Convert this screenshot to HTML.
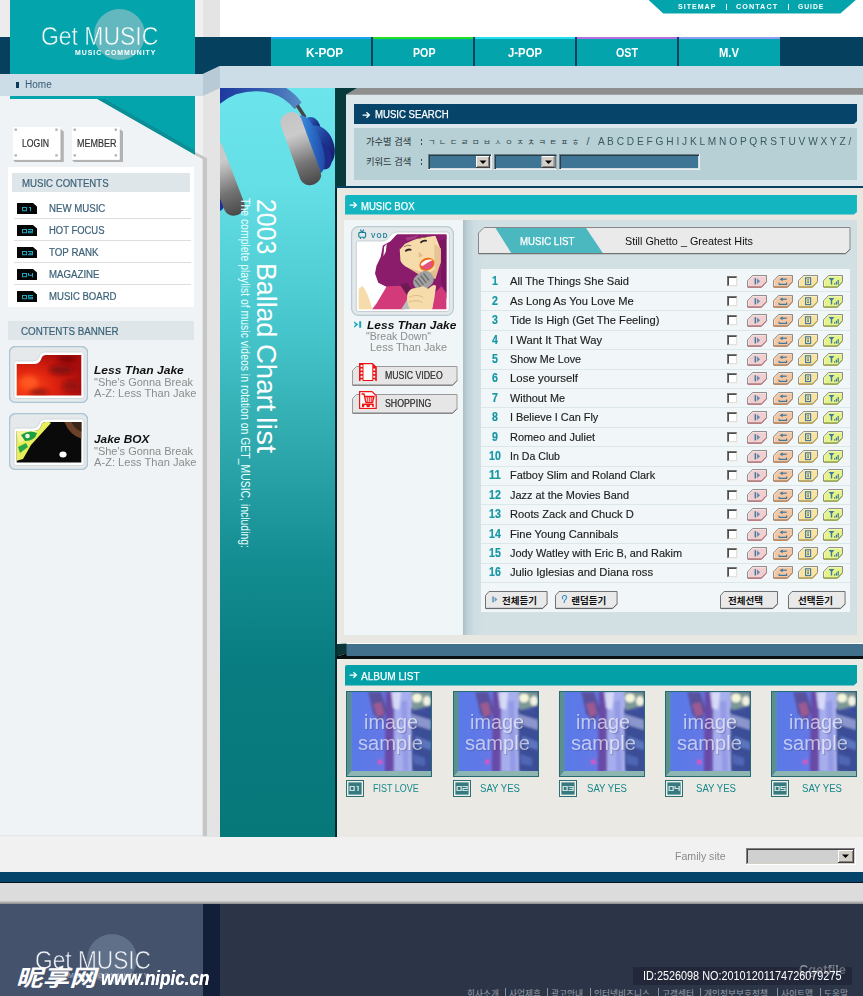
<!DOCTYPE html>
<html><head><meta charset="utf-8"><title>Get MUSIC</title>
<style>
html,body{margin:0;padding:0;background:#fff;}
#p{position:relative;width:863px;height:996px;overflow:hidden;background:#fff;font-family:"Liberation Sans",sans-serif;}
#p>div,#p>svg,#p>span.t{position:absolute;}
#p span.t{white-space:nowrap;line-height:1;transform-origin:0 0;}
</style></head><body><div id="p">
<div style="left:0px;top:0px;width:10px;height:37px;background:#ececec;"></div>
<div style="left:195px;top:0px;width:8px;height:160px;background:#f0f0f0;"></div>
<div style="left:203px;top:0px;width:17px;height:837px;background:#e4e4e4;"></div>
<div style="left:0px;top:37px;width:10px;height:37px;background:#05405f;"></div>
<div style="left:195px;top:37px;width:668px;height:29px;background:#05405f;"></div>
<div style="left:195px;top:66px;width:8px;height:8px;background:#05405f;"></div>
<svg style="left:0px;top:0px;" width="220" height="170" viewBox="0 0 220 170"><polygon points="10,0 195,0 195,155 97,99 10,99" fill="#04a4ac"/><polygon points="97,99 195,155 195,150.5 105,99" fill="#0b8e96"/><polygon points="203,66 220,66 203,74" fill="#05405f"/><polygon points="203,74 220,66 220,88 203,96" fill="#b7cad5"/></svg>
<div style="left:0px;top:74px;width:203px;height:22px;background:#ccdde8;"></div>
<div style="left:220px;top:66px;width:643px;height:22px;background:#ccdde8;"></div>
<span class="t" style="left:41.30px;top:23px;font-size:26px;color:#fff;transform:scaleX(0.8826);-webkit-text-stroke:0.55px #04a4ac;">Get MUSIC</span>
<div style="left:94px;top:9px;width:51px;height:51px;border-radius:50%;background:#62b8be;overflow:hidden;"><span class="t" style="left:-52.70px;top:14px;font-size:26px;color:#fff;transform:scaleX(0.8826);position:absolute;-webkit-text-stroke:0.55px #62b8be;">Get MUSIC</span></div>
<span class="t" style="left:74.60px;top:50px;font-size:6.5px;color:#fff;font-weight:bold;letter-spacing:0.9px;transform:scaleX(1.0664);">MUSIC COMMUNITY</span>
<div style="left:16px;top:82px;width:2.5px;height:6px;background:#0a3a5a;"></div>
<span class="t" style="left:25.30px;top:80px;font-size:10px;color:#3a5a70;transform:scaleX(1.0009);">Home</span>
<div style="left:271px;top:37px;width:100.3px;height:29px;background:#04a4ac;"></div>
<div style="left:271px;top:37px;width:100.3px;height:2.3px;background:#18a4ea;"></div>
<span class="t" style="left:306.20px;top:47px;font-size:12px;color:#fff;font-weight:bold;transform:scaleX(0.9788);">K-POP</span>
<div style="left:373px;top:37px;width:100.3px;height:29px;background:#04a4ac;"></div>
<div style="left:373px;top:37px;width:100.3px;height:2.3px;background:#22dd22;"></div>
<span class="t" style="left:413.00px;top:47px;font-size:12px;color:#fff;font-weight:bold;transform:scaleX(0.8879);">POP</span>
<div style="left:475px;top:37px;width:100.3px;height:29px;background:#04a4ac;"></div>
<div style="left:475px;top:37px;width:100.3px;height:2.3px;background:#22ddee;"></div>
<span class="t" style="left:507.50px;top:47px;font-size:12px;color:#fff;font-weight:bold;transform:scaleX(0.9441);">J-POP</span>
<div style="left:577px;top:37px;width:100.3px;height:29px;background:#04a4ac;"></div>
<div style="left:577px;top:37px;width:100.3px;height:2.3px;background:#b070e0;"></div>
<span class="t" style="left:616.00px;top:47px;font-size:12px;color:#fff;font-weight:bold;transform:scaleX(0.8918);">OST</span>
<div style="left:679px;top:37px;width:101px;height:29px;background:#04a4ac;"></div>
<div style="left:679px;top:37px;width:101px;height:2.3px;background:#8c9cf0;"></div>
<span class="t" style="left:719.00px;top:47px;font-size:12px;color:#fff;font-weight:bold;transform:scaleX(0.9375);">M.V</span>
<svg style="left:640px;top:0px;" width="223" height="16" viewBox="0 0 223 16"><polygon points="8.6,0 215.8,0 200.3,13.4 23.3,13.4" fill="#04a4ac"/></svg>
<span class="t" style="left:677.60px;top:3px;font-size:7px;color:#fff;font-weight:bold;letter-spacing:1px;transform:scaleX(1.0075);">SITEMAP</span>
<span class="t" style="left:735.60px;top:3px;font-size:7px;color:#fff;font-weight:bold;letter-spacing:1px;transform:scaleX(1.0345);">CONTACT</span>
<span class="t" style="left:797.70px;top:3px;font-size:7px;color:#fff;font-weight:bold;letter-spacing:1px;transform:scaleX(0.9680);">GUIDE</span>
<div style="left:725.5px;top:3.5px;width:1px;height:6px;background:#fff;"></div>
<div style="left:787.5px;top:3.5px;width:1px;height:6px;background:#fff;"></div>
<svg style="left:0px;top:96px;" width="210" height="742" viewBox="0 0 210 742"><polygon points="0,0 0,740 202.6,740 202.6,63 195,59 97,3 10,3 10,0" fill="#eff3f5"/><polygon points="195,56 207,62 207,740 202.6,740 202.6,63 195,59" fill="#c6c6c6"/><rect x="0" y="739.5" width="203" height="1" fill="#dcdcdc"/></svg>
<svg style="left:12.5px;top:126.5px;" width="51.3" height="35.7" viewBox="0 0 51.3 35.7"><polygon points="47.3,2 50.8,4.5 50.8,35.2 2,35.2 0,32.7 47.3,32.7" fill="#b2b2b2"/><rect x="0" y="0" width="47.3" height="32.7" fill="#fff"/><rect x="1.5" y="1.5" width="2.4" height="2.4" fill="#b4b4b4"/><rect x="42.3" y="1.5" width="2.4" height="2.4" fill="#b4b4b4"/><rect x="1.5" y="27.200000000000003" width="2.4" height="2.4" fill="#b4b4b4"/><rect x="42.3" y="27.200000000000003" width="2.4" height="2.4" fill="#b4b4b4"/></svg>
<span class="t" style="left:21.70px;top:139px;font-size:10px;color:#333;transform:scaleX(0.8709);-webkit-text-stroke:0.2px #333;">LOGIN</span>
<svg style="left:71.6px;top:126.5px;" width="51.6" height="35.7" viewBox="0 0 51.6 35.7"><polygon points="47.6,2 51.1,4.5 51.1,35.2 2,35.2 0,32.7 47.6,32.7" fill="#b2b2b2"/><rect x="0" y="0" width="47.6" height="32.7" fill="#fff"/><rect x="1.5" y="1.5" width="2.4" height="2.4" fill="#b4b4b4"/><rect x="42.6" y="1.5" width="2.4" height="2.4" fill="#b4b4b4"/><rect x="1.5" y="27.200000000000003" width="2.4" height="2.4" fill="#b4b4b4"/><rect x="42.6" y="27.200000000000003" width="2.4" height="2.4" fill="#b4b4b4"/></svg>
<span class="t" style="left:77.00px;top:139px;font-size:10px;color:#333;transform:scaleX(0.8999);-webkit-text-stroke:0.2px #333;">MEMBER</span>
<div style="left:8px;top:167px;width:186px;height:140px;background:#fff;"></div>
<div style="left:12px;top:173px;width:178px;height:19px;background:#dfe6e9;"></div>
<span class="t" style="left:21.70px;top:179px;font-size:10px;color:#3b6178;transform:scaleX(0.9622);-webkit-text-stroke:0.2px #3b6178;">MUSIC CONTENTS</span>
<svg style="left:17px;top:203px;" width="20" height="11" viewBox="0 0 20 11"><polygon points="0,0 16,0 20,3.5 20,11 0,11" fill="#050505"/><rect x="5.00" y="4.20" width="1.0" height="0.8" fill="#22d2ee"/><rect x="6.00" y="4.20" width="1.0" height="0.8" fill="#22d2ee"/><rect x="7.00" y="4.20" width="1.0" height="0.8" fill="#22d2ee"/><rect x="8.00" y="4.20" width="1.0" height="0.8" fill="#22d2ee"/><rect x="9.00" y="4.20" width="1.0" height="0.8" fill="#22d2ee"/><rect x="5.00" y="5.00" width="1.0" height="0.8" fill="#22d2ee"/><rect x="9.00" y="5.00" width="1.0" height="0.8" fill="#22d2ee"/><rect x="5.00" y="5.80" width="1.0" height="0.8" fill="#22d2ee"/><rect x="9.00" y="5.80" width="1.0" height="0.8" fill="#22d2ee"/><rect x="5.00" y="6.60" width="1.0" height="0.8" fill="#22d2ee"/><rect x="9.00" y="6.60" width="1.0" height="0.8" fill="#22d2ee"/><rect x="5.00" y="7.40" width="1.0" height="0.8" fill="#22d2ee"/><rect x="6.00" y="7.40" width="1.0" height="0.8" fill="#22d2ee"/><rect x="7.00" y="7.40" width="1.0" height="0.8" fill="#22d2ee"/><rect x="8.00" y="7.40" width="1.0" height="0.8" fill="#22d2ee"/><rect x="9.00" y="7.40" width="1.0" height="0.8" fill="#22d2ee"/><rect x="12.00" y="4.20" width="1.0" height="0.8" fill="#22d2ee"/><rect x="13.00" y="4.20" width="1.0" height="0.8" fill="#22d2ee"/><rect x="13.00" y="5.00" width="1.0" height="0.8" fill="#22d2ee"/><rect x="13.00" y="5.80" width="1.0" height="0.8" fill="#22d2ee"/><rect x="13.00" y="6.60" width="1.0" height="0.8" fill="#22d2ee"/><rect x="13.00" y="7.40" width="1.0" height="0.8" fill="#22d2ee"/></svg>
<span class="t" style="left:48.70px;top:204px;font-size:10px;color:#3b6178;transform:scaleX(0.9652);-webkit-text-stroke:0.2px #3b6178;">NEW MUSIC</span>
<div style="left:13.5px;top:218px;width:177px;height:1px;background:#dedede;"></div>
<svg style="left:17px;top:225px;" width="20" height="11" viewBox="0 0 20 11"><polygon points="0,0 16,0 20,3.5 20,11 0,11" fill="#050505"/><rect x="5.00" y="4.20" width="1.0" height="0.8" fill="#22d2ee"/><rect x="6.00" y="4.20" width="1.0" height="0.8" fill="#22d2ee"/><rect x="7.00" y="4.20" width="1.0" height="0.8" fill="#22d2ee"/><rect x="8.00" y="4.20" width="1.0" height="0.8" fill="#22d2ee"/><rect x="9.00" y="4.20" width="1.0" height="0.8" fill="#22d2ee"/><rect x="5.00" y="5.00" width="1.0" height="0.8" fill="#22d2ee"/><rect x="9.00" y="5.00" width="1.0" height="0.8" fill="#22d2ee"/><rect x="5.00" y="5.80" width="1.0" height="0.8" fill="#22d2ee"/><rect x="9.00" y="5.80" width="1.0" height="0.8" fill="#22d2ee"/><rect x="5.00" y="6.60" width="1.0" height="0.8" fill="#22d2ee"/><rect x="9.00" y="6.60" width="1.0" height="0.8" fill="#22d2ee"/><rect x="5.00" y="7.40" width="1.0" height="0.8" fill="#22d2ee"/><rect x="6.00" y="7.40" width="1.0" height="0.8" fill="#22d2ee"/><rect x="7.00" y="7.40" width="1.0" height="0.8" fill="#22d2ee"/><rect x="8.00" y="7.40" width="1.0" height="0.8" fill="#22d2ee"/><rect x="9.00" y="7.40" width="1.0" height="0.8" fill="#22d2ee"/><rect x="11.00" y="4.20" width="1.0" height="0.8" fill="#22d2ee"/><rect x="12.00" y="4.20" width="1.0" height="0.8" fill="#22d2ee"/><rect x="13.00" y="4.20" width="1.0" height="0.8" fill="#22d2ee"/><rect x="14.00" y="4.20" width="1.0" height="0.8" fill="#22d2ee"/><rect x="15.00" y="4.20" width="1.0" height="0.8" fill="#22d2ee"/><rect x="15.00" y="5.00" width="1.0" height="0.8" fill="#22d2ee"/><rect x="11.00" y="5.80" width="1.0" height="0.8" fill="#22d2ee"/><rect x="12.00" y="5.80" width="1.0" height="0.8" fill="#22d2ee"/><rect x="13.00" y="5.80" width="1.0" height="0.8" fill="#22d2ee"/><rect x="14.00" y="5.80" width="1.0" height="0.8" fill="#22d2ee"/><rect x="15.00" y="5.80" width="1.0" height="0.8" fill="#22d2ee"/><rect x="11.00" y="6.60" width="1.0" height="0.8" fill="#22d2ee"/><rect x="11.00" y="7.40" width="1.0" height="0.8" fill="#22d2ee"/><rect x="12.00" y="7.40" width="1.0" height="0.8" fill="#22d2ee"/><rect x="13.00" y="7.40" width="1.0" height="0.8" fill="#22d2ee"/><rect x="14.00" y="7.40" width="1.0" height="0.8" fill="#22d2ee"/><rect x="15.00" y="7.40" width="1.0" height="0.8" fill="#22d2ee"/></svg>
<span class="t" style="left:48.70px;top:226px;font-size:10px;color:#3b6178;transform:scaleX(0.9454);-webkit-text-stroke:0.2px #3b6178;">HOT FOCUS</span>
<div style="left:13.5px;top:240px;width:177px;height:1px;background:#dedede;"></div>
<svg style="left:17px;top:247px;" width="20" height="11" viewBox="0 0 20 11"><polygon points="0,0 16,0 20,3.5 20,11 0,11" fill="#050505"/><rect x="5.00" y="4.20" width="1.0" height="0.8" fill="#22d2ee"/><rect x="6.00" y="4.20" width="1.0" height="0.8" fill="#22d2ee"/><rect x="7.00" y="4.20" width="1.0" height="0.8" fill="#22d2ee"/><rect x="8.00" y="4.20" width="1.0" height="0.8" fill="#22d2ee"/><rect x="9.00" y="4.20" width="1.0" height="0.8" fill="#22d2ee"/><rect x="5.00" y="5.00" width="1.0" height="0.8" fill="#22d2ee"/><rect x="9.00" y="5.00" width="1.0" height="0.8" fill="#22d2ee"/><rect x="5.00" y="5.80" width="1.0" height="0.8" fill="#22d2ee"/><rect x="9.00" y="5.80" width="1.0" height="0.8" fill="#22d2ee"/><rect x="5.00" y="6.60" width="1.0" height="0.8" fill="#22d2ee"/><rect x="9.00" y="6.60" width="1.0" height="0.8" fill="#22d2ee"/><rect x="5.00" y="7.40" width="1.0" height="0.8" fill="#22d2ee"/><rect x="6.00" y="7.40" width="1.0" height="0.8" fill="#22d2ee"/><rect x="7.00" y="7.40" width="1.0" height="0.8" fill="#22d2ee"/><rect x="8.00" y="7.40" width="1.0" height="0.8" fill="#22d2ee"/><rect x="9.00" y="7.40" width="1.0" height="0.8" fill="#22d2ee"/><rect x="11.00" y="4.20" width="1.0" height="0.8" fill="#22d2ee"/><rect x="12.00" y="4.20" width="1.0" height="0.8" fill="#22d2ee"/><rect x="13.00" y="4.20" width="1.0" height="0.8" fill="#22d2ee"/><rect x="14.00" y="4.20" width="1.0" height="0.8" fill="#22d2ee"/><rect x="15.00" y="4.20" width="1.0" height="0.8" fill="#22d2ee"/><rect x="15.00" y="5.00" width="1.0" height="0.8" fill="#22d2ee"/><rect x="12.00" y="5.80" width="1.0" height="0.8" fill="#22d2ee"/><rect x="13.00" y="5.80" width="1.0" height="0.8" fill="#22d2ee"/><rect x="14.00" y="5.80" width="1.0" height="0.8" fill="#22d2ee"/><rect x="15.00" y="5.80" width="1.0" height="0.8" fill="#22d2ee"/><rect x="15.00" y="6.60" width="1.0" height="0.8" fill="#22d2ee"/><rect x="11.00" y="7.40" width="1.0" height="0.8" fill="#22d2ee"/><rect x="12.00" y="7.40" width="1.0" height="0.8" fill="#22d2ee"/><rect x="13.00" y="7.40" width="1.0" height="0.8" fill="#22d2ee"/><rect x="14.00" y="7.40" width="1.0" height="0.8" fill="#22d2ee"/><rect x="15.00" y="7.40" width="1.0" height="0.8" fill="#22d2ee"/></svg>
<span class="t" style="left:48.70px;top:248px;font-size:10px;color:#3b6178;transform:scaleX(0.9752);-webkit-text-stroke:0.2px #3b6178;">TOP RANK</span>
<div style="left:13.5px;top:262px;width:177px;height:1px;background:#dedede;"></div>
<svg style="left:17px;top:269px;" width="20" height="11" viewBox="0 0 20 11"><polygon points="0,0 16,0 20,3.5 20,11 0,11" fill="#050505"/><rect x="5.00" y="4.20" width="1.0" height="0.8" fill="#22d2ee"/><rect x="6.00" y="4.20" width="1.0" height="0.8" fill="#22d2ee"/><rect x="7.00" y="4.20" width="1.0" height="0.8" fill="#22d2ee"/><rect x="8.00" y="4.20" width="1.0" height="0.8" fill="#22d2ee"/><rect x="9.00" y="4.20" width="1.0" height="0.8" fill="#22d2ee"/><rect x="5.00" y="5.00" width="1.0" height="0.8" fill="#22d2ee"/><rect x="9.00" y="5.00" width="1.0" height="0.8" fill="#22d2ee"/><rect x="5.00" y="5.80" width="1.0" height="0.8" fill="#22d2ee"/><rect x="9.00" y="5.80" width="1.0" height="0.8" fill="#22d2ee"/><rect x="5.00" y="6.60" width="1.0" height="0.8" fill="#22d2ee"/><rect x="9.00" y="6.60" width="1.0" height="0.8" fill="#22d2ee"/><rect x="5.00" y="7.40" width="1.0" height="0.8" fill="#22d2ee"/><rect x="6.00" y="7.40" width="1.0" height="0.8" fill="#22d2ee"/><rect x="7.00" y="7.40" width="1.0" height="0.8" fill="#22d2ee"/><rect x="8.00" y="7.40" width="1.0" height="0.8" fill="#22d2ee"/><rect x="9.00" y="7.40" width="1.0" height="0.8" fill="#22d2ee"/><rect x="11.00" y="4.20" width="1.0" height="0.8" fill="#22d2ee"/><rect x="15.00" y="4.20" width="1.0" height="0.8" fill="#22d2ee"/><rect x="11.00" y="5.00" width="1.0" height="0.8" fill="#22d2ee"/><rect x="15.00" y="5.00" width="1.0" height="0.8" fill="#22d2ee"/><rect x="11.00" y="5.80" width="1.0" height="0.8" fill="#22d2ee"/><rect x="12.00" y="5.80" width="1.0" height="0.8" fill="#22d2ee"/><rect x="13.00" y="5.80" width="1.0" height="0.8" fill="#22d2ee"/><rect x="14.00" y="5.80" width="1.0" height="0.8" fill="#22d2ee"/><rect x="15.00" y="5.80" width="1.0" height="0.8" fill="#22d2ee"/><rect x="15.00" y="6.60" width="1.0" height="0.8" fill="#22d2ee"/><rect x="15.00" y="7.40" width="1.0" height="0.8" fill="#22d2ee"/></svg>
<span class="t" style="left:48.70px;top:270px;font-size:10px;color:#3b6178;transform:scaleX(0.9669);-webkit-text-stroke:0.2px #3b6178;">MAGAZINE</span>
<div style="left:13.5px;top:284px;width:177px;height:1px;background:#dedede;"></div>
<svg style="left:17px;top:291px;" width="20" height="11" viewBox="0 0 20 11"><polygon points="0,0 16,0 20,3.5 20,11 0,11" fill="#050505"/><rect x="5.00" y="4.20" width="1.0" height="0.8" fill="#22d2ee"/><rect x="6.00" y="4.20" width="1.0" height="0.8" fill="#22d2ee"/><rect x="7.00" y="4.20" width="1.0" height="0.8" fill="#22d2ee"/><rect x="8.00" y="4.20" width="1.0" height="0.8" fill="#22d2ee"/><rect x="9.00" y="4.20" width="1.0" height="0.8" fill="#22d2ee"/><rect x="5.00" y="5.00" width="1.0" height="0.8" fill="#22d2ee"/><rect x="9.00" y="5.00" width="1.0" height="0.8" fill="#22d2ee"/><rect x="5.00" y="5.80" width="1.0" height="0.8" fill="#22d2ee"/><rect x="9.00" y="5.80" width="1.0" height="0.8" fill="#22d2ee"/><rect x="5.00" y="6.60" width="1.0" height="0.8" fill="#22d2ee"/><rect x="9.00" y="6.60" width="1.0" height="0.8" fill="#22d2ee"/><rect x="5.00" y="7.40" width="1.0" height="0.8" fill="#22d2ee"/><rect x="6.00" y="7.40" width="1.0" height="0.8" fill="#22d2ee"/><rect x="7.00" y="7.40" width="1.0" height="0.8" fill="#22d2ee"/><rect x="8.00" y="7.40" width="1.0" height="0.8" fill="#22d2ee"/><rect x="9.00" y="7.40" width="1.0" height="0.8" fill="#22d2ee"/><rect x="11.00" y="4.20" width="1.0" height="0.8" fill="#22d2ee"/><rect x="12.00" y="4.20" width="1.0" height="0.8" fill="#22d2ee"/><rect x="13.00" y="4.20" width="1.0" height="0.8" fill="#22d2ee"/><rect x="14.00" y="4.20" width="1.0" height="0.8" fill="#22d2ee"/><rect x="15.00" y="4.20" width="1.0" height="0.8" fill="#22d2ee"/><rect x="11.00" y="5.00" width="1.0" height="0.8" fill="#22d2ee"/><rect x="11.00" y="5.80" width="1.0" height="0.8" fill="#22d2ee"/><rect x="12.00" y="5.80" width="1.0" height="0.8" fill="#22d2ee"/><rect x="13.00" y="5.80" width="1.0" height="0.8" fill="#22d2ee"/><rect x="14.00" y="5.80" width="1.0" height="0.8" fill="#22d2ee"/><rect x="15.00" y="5.80" width="1.0" height="0.8" fill="#22d2ee"/><rect x="15.00" y="6.60" width="1.0" height="0.8" fill="#22d2ee"/><rect x="11.00" y="7.40" width="1.0" height="0.8" fill="#22d2ee"/><rect x="12.00" y="7.40" width="1.0" height="0.8" fill="#22d2ee"/><rect x="13.00" y="7.40" width="1.0" height="0.8" fill="#22d2ee"/><rect x="14.00" y="7.40" width="1.0" height="0.8" fill="#22d2ee"/><rect x="15.00" y="7.40" width="1.0" height="0.8" fill="#22d2ee"/></svg>
<span class="t" style="left:48.70px;top:292px;font-size:10px;color:#3b6178;transform:scaleX(0.9566);-webkit-text-stroke:0.2px #3b6178;">MUSIC BOARD</span>
<div style="left:8px;top:321px;width:186px;height:19px;background:#dfe6e9;"></div>
<span class="t" style="left:21.20px;top:327px;font-size:10px;color:#3b6178;transform:scaleX(0.9804);-webkit-text-stroke:0.2px #3b6178;">CONTENTS BANNER</span>
<svg style="left:9px;top:346px;" width="79" height="57" viewBox="0 0 79 57"><rect x="0.5" y="0.5" width="78" height="56" rx="6" ry="6" fill="#e6e9eb" stroke="#adc6d3" stroke-width="1.5"/><path d="M7 52.5 Q5 52.5 5 50.5 V17 Q5 15 7 15 H24 Q28.5 15 30 11 Q31.5 6 36 6 H73 Q75 6 75 8 V50.5 Q75 52.5 73 52.5 Z" fill="#fff" stroke="#c9d2d7" stroke-width="0.8"/><clipPath id="bca"><path d="M7.7 18 H25 Q30.5 18 32.2 13 Q33.3 9 37 9 H72.3 V49.5 H7.7 Z"/></clipPath><g clip-path="url(#bca)"><defs><radialGradient id="rg1" cx="0.2" cy="0.75" r="0.8"><stop offset="0" stop-color="#ff4a18"/><stop offset="0.45" stop-color="#e02410"/><stop offset="1" stop-color="#a80c0c"/></radialGradient><filter id="bl1"><feGaussianBlur stdDeviation="2"/></filter></defs><rect x="5" y="6" width="70" height="46" fill="url(#rg1)"/><g filter="url(#bl1)"><ellipse cx="52" cy="24" rx="12" ry="5" fill="#7a0a10" opacity="0.8"/><ellipse cx="62" cy="40" rx="9" ry="6" fill="#8a0c10" opacity="0.7"/><ellipse cx="30" cy="46" rx="10" ry="4" fill="#8a1010" opacity="0.7"/><ellipse cx="58" cy="13" rx="9" ry="3" fill="#6a0808" opacity="0.7"/><ellipse cx="20" cy="36" rx="9" ry="6" fill="#ff5a22" opacity="0.9"/></g></g></svg>
<svg style="left:9px;top:413px;" width="79" height="57" viewBox="0 0 79 57"><rect x="0.5" y="0.5" width="78" height="56" rx="6" ry="6" fill="#e6e9eb" stroke="#adc6d3" stroke-width="1.5"/><path d="M7 52.5 Q5 52.5 5 50.5 V17 Q5 15 7 15 H24 Q28.5 15 30 11 Q31.5 6 36 6 H73 Q75 6 75 8 V50.5 Q75 52.5 73 52.5 Z" fill="#fff" stroke="#c9d2d7" stroke-width="0.8"/><clipPath id="bcb"><path d="M7.7 18 H25 Q30.5 18 32.2 13 Q33.3 9 37 9 H72.3 V49.5 H7.7 Z"/></clipPath><g clip-path="url(#bcb)"><rect x="5" y="6" width="70" height="46" fill="#0a0a0a"/><polygon points="7,18 38,8 42,10 22,32 14,46 7,48" fill="#e8ee5a"/><polygon points="7,18 30,12 26,22 10,30" fill="#f4f49a"/><path d="M12 22 q8 -6 16 -2 q-2 8 -12 8 z" fill="#1aa040"/><circle cx="18.5" cy="23" r="2.3" fill="#f4f4e0"/><path d="M9 34 l8 -4 l2 4 l-8 6 z" fill="#2aa848"/><path d="M55 8 H73 V26 Q60 22 55 8Z" fill="#6a4028"/><path d="M62 8 H73 V19 Q65 16 62 8Z" fill="#3a2418"/><ellipse cx="54" cy="41.5" rx="3.6" ry="3" fill="#fff"/></g></svg>
<span class="t" style="left:94.20px;top:365px;font-size:11px;color:#111;font-weight:bold;font-style:italic;transform:scaleX(1.0960);">Less Than Jake</span>
<span class="t" style="left:93.50px;top:377px;font-size:11px;color:#8c8c8c;transform:scaleX(1.0005);">"She's Gonna Break</span>
<span class="t" style="left:94.40px;top:388px;font-size:11px;color:#8c8c8c;transform:scaleX(1.0120);">A-Z: Less Than Jake</span>
<span class="t" style="left:94.20px;top:434px;font-size:11px;color:#111;font-weight:bold;font-style:italic;transform:scaleX(1.0766);">Jake BOX</span>
<span class="t" style="left:93.50px;top:446px;font-size:11px;color:#8c8c8c;transform:scaleX(1.0005);">"She's Gonna Break</span>
<span class="t" style="left:94.40px;top:457px;font-size:11px;color:#8c8c8c;transform:scaleX(1.0120);">A-Z: Less Than Jake</span>
<svg style="left:220px;top:88px;" width="115" height="749" viewBox="0 0 115 749"><defs>
<linearGradient id="pg" x1="0" y1="0" x2="0" y2="1">
<stop offset="0" stop-color="#6be5eb"/><stop offset="0.13" stop-color="#64dfe5"/>
<stop offset="0.32" stop-color="#46c6cc"/><stop offset="0.48" stop-color="#2ea8ac"/>
<stop offset="0.63" stop-color="#138d91"/><stop offset="0.78" stop-color="#087c80"/>
<stop offset="1" stop-color="#07787a"/></linearGradient>
<linearGradient id="bandg" x1="0" y1="0" x2="1" y2="0">
<stop offset="0" stop-color="#1b38a0"/><stop offset="0.5" stop-color="#3258ac"/><stop offset="1" stop-color="#5a8cc6"/></linearGradient>
<linearGradient id="padg" x1="0" y1="0" x2="0" y2="1">
<stop offset="0" stop-color="#c4c4c4"/><stop offset="0.3" stop-color="#cbcbcb"/>
<stop offset="0.42" stop-color="#b4b4b4"/><stop offset="0.7" stop-color="#747474"/>
<stop offset="1" stop-color="#484848"/></linearGradient>
<linearGradient id="cupg" x1="0" y1="0" x2="1" y2="1">
<stop offset="0" stop-color="#4aaaf4"/><stop offset="0.5" stop-color="#2d72ca"/><stop offset="1" stop-color="#1b3898"/></linearGradient>
<linearGradient id="cupg2" x1="0" y1="0" x2="0.6" y2="1">
<stop offset="0" stop-color="#3a86d8"/><stop offset="0.6" stop-color="#1e3c98"/><stop offset="1" stop-color="#151a70"/></linearGradient>
<clipPath id="pc"><rect x="0" y="0" width="115" height="749"/></clipPath>
</defs>
<rect x="0" y="0" width="115" height="749" fill="url(#pg)"/>
<g clip-path="url(#pc)">
<!-- band -->
<path d="M-2 -2 H63 Q75 5 81.6 14.4 L74.6 21.2 Q65 9.5 52 5.6 Q36 0.8 16 6.2 Q7 9.5 -2 17.5 Z" fill="url(#bandg)"/>
<!-- connector -->
<path d="M75.8 18.2 L78.8 16.4 L86.6 28.5 L83.4 30 Z" fill="#454545"/>
<!-- right cup -->
<g transform="translate(81.3,60.5) rotate(-20)">
<ellipse cx="17" cy="-16" rx="8.5" ry="11" fill="url(#cupg2)"/>
<ellipse cx="17.5" cy="4" rx="14.8" ry="21.5" fill="url(#cupg2)"/>
<ellipse cx="17" cy="14" rx="9" ry="14" fill="#1c2c88"/>
<ellipse cx="9.5" cy="-1" rx="11.5" ry="30.5" fill="url(#cupg)"/>
</g>
<!-- right pad -->
<g transform="translate(81.3,60.5) rotate(-20)"><rect x="-11.4" y="-38.1" width="21.6" height="76.2" rx="10.6" ry="9.5" fill="url(#padg)"/></g>
<!-- left cup bit + pad -->
<ellipse cx="-4" cy="112" rx="10" ry="12" fill="#1c339a"/>
<g transform="translate(3.3,89.5) rotate(-21)"><rect x="-10.5" y="-40" width="21" height="80" rx="10" ry="9" fill="url(#padg)"/></g>
</g></svg>
<span class="t" style="left:280px;top:199.0px;font-size:28px;color:#fff;transform:rotate(90deg) scaleX(0.8894);">2003</span>
<span class="t" style="left:280px;top:263.0px;font-size:28px;color:#fff;transform:rotate(90deg) scaleX(0.9546);">Ballad</span>
<span class="t" style="left:280px;top:343.7px;font-size:28px;color:#fff;transform:rotate(90deg) scaleX(0.9829);">Chart</span>
<span class="t" style="left:280px;top:416.7px;font-size:28px;color:#fff;transform:rotate(90deg) scaleX(1.0608);">list</span>
<span class="t" style="left:251px;top:198px;font-size:12px;color:#e8ffff;transform:rotate(90deg) scaleX(0.8703);">The complete playlist of music videos in rotation on GET_MUSIC, including:</span>
<div style="left:335px;top:88px;width:11px;height:100px;background:#083a3c;"></div>
<div style="left:335px;top:188px;width:1.5px;height:649px;background:#06282c;"></div>
<div style="left:346px;top:88px;width:517px;height:98px;background:#dbe7eb;"></div>
<svg style="left:335px;top:88px;" width="528" height="7" viewBox="0 0 528 7"><polygon points="11,6.8 22,0 528,0 528,6.8" fill="#8f8f8f"/><polygon points="0,0 22,0 11,6.8 0,6.8" fill="#083a3c"/></svg>
<div style="left:335.5px;top:186px;width:528px;height:2.3px;background:#05405f;"></div>
<svg style="left:354px;top:104px;" width="504" height="20" viewBox="0 0 504 20"><polygon points="0,0 503,0 503,17 500,20 0,20" fill="#06446a"/></svg>
<svg style="left:362.3px;top:110.6px;" width="9" height="8" viewBox="0 0 9 8"><path d="M0.6 4 H7.2 M4.4 1.2 L7.4 4 L4.4 6.8" fill="none" stroke="#fff" stroke-width="1.25"/></svg>
<span class="t" style="left:375.00px;top:110px;font-size:10px;color:#fff;transform:scaleX(0.9599);-webkit-text-stroke:0.25px #fff;">MUSIC SEARCH</span>
<div style="left:354px;top:128px;width:503px;height:52px;background:#b6d0d5;"></div>
<svg style="left:363.2px;top:131.2px;" width="55" height="20" viewBox="0 0 55 20"><text x="3" y="14" font-size="9.3" fill="#2c3438" font-family="'Liberation Sans','Noto Sans CJK KR',sans-serif">가수별 검색</text></svg>
<svg style="left:363.2px;top:150.9px;" width="55" height="20" viewBox="0 0 55 20"><text x="3" y="14" font-size="9.3" fill="#2c3438" font-family="'Liberation Sans','Noto Sans CJK KR',sans-serif">키워드 검색</text></svg>
<div style="left:420.6px;top:139.3px;width:1.3px;height:1.5px;background:#3a4a50;"></div>
<div style="left:420.6px;top:143.3px;width:1.3px;height:1.5px;background:#3a4a50;"></div>
<div style="left:420.6px;top:159.0px;width:1.3px;height:1.5px;background:#3a4a50;"></div>
<div style="left:420.6px;top:163.0px;width:1.3px;height:1.5px;background:#3a4a50;"></div>
<svg style="left:427.0px;top:136.6px;" width="160" height="10" viewBox="0 0 160 10"><text x="4.6 15.7 26.7 37.8 48.8 59.9 71 82 93.1 104.1 115.2 126.3 137.4 148.4" y="7.9" font-size="8" fill="#2e4248" text-anchor="middle" font-family="'Liberation Sans','Noto Sans CJK KR',sans-serif">ㄱㄴㄷㄹㅁㅂㅅㅇㅈㅊㅋㅌㅍㅎ</text></svg>
<span class="t" style="left:586.60px;top:136px;font-size:11px;color:#3c5860;">/</span>
<span class="t" style="left:598.20px;top:136px;font-size:11px;color:#3c5860;transform:scaleX(0.9236);">A B C D E F G H I J K L M N O P Q R S T U V W X Y Z /</span>
<svg style="left:428px;top:154px;" width="64" height="16" viewBox="0 0 64 16"><rect x="0" y="0" width="64" height="16" fill="#e8eef0"/><rect x="0" y="0" width="63" height="15" fill="#6a7e88"/><rect x="1" y="1" width="62" height="14" fill="#2a3c48"/><rect x="2" y="2" width="61" height="13" fill="#d6dde0"/><rect x="2" y="2" width="60" height="12" fill="#3f7594"/><rect x="48" y="2" width="14" height="12" fill="#404040"/><rect x="48" y="2" width="13" height="11" fill="#fff"/><rect x="49" y="3" width="12" height="10" fill="#808080"/><rect x="49" y="3" width="11" height="9" fill="#d4d0c8"/><polygon points="51.5,6.5 58.5,6.5 55,10.0" fill="#000"/></svg>
<svg style="left:493.5px;top:154px;" width="63.5" height="16" viewBox="0 0 63.5 16"><rect x="0" y="0" width="63.5" height="16" fill="#e8eef0"/><rect x="0" y="0" width="62.5" height="15" fill="#6a7e88"/><rect x="1" y="1" width="61.5" height="14" fill="#2a3c48"/><rect x="2" y="2" width="60.5" height="13" fill="#d6dde0"/><rect x="2" y="2" width="59.5" height="12" fill="#3f7594"/><rect x="47.5" y="2" width="14" height="12" fill="#404040"/><rect x="47.5" y="2" width="13" height="11" fill="#fff"/><rect x="48.5" y="3" width="12" height="10" fill="#808080"/><rect x="48.5" y="3" width="11" height="9" fill="#d4d0c8"/><polygon points="51.0,6.5 58.0,6.5 54.5,10.0" fill="#000"/></svg>
<svg style="left:559px;top:154px;" width="141" height="16" viewBox="0 0 141 16"><rect x="0" y="0" width="141" height="16" fill="#e8eef0"/><rect x="0" y="0" width="140" height="15" fill="#6a7e88"/><rect x="1" y="1" width="139" height="14" fill="#2a3c48"/><rect x="2" y="2" width="138" height="13" fill="#d6dde0"/><rect x="2" y="2" width="137" height="12" fill="#3f7594"/></svg>
<div style="left:337px;top:188px;width:526px;height:455px;background:#e9e7e1;"></div>
<svg style="left:345px;top:194.7px;" width="513" height="20.3" viewBox="0 0 513 20.3"><path d="M2 0 H512 V17 L509 19.6 H0 V2 Q0 0 2 0Z" fill="#13b5c0"/></svg>
<svg style="left:348.8px;top:201.4px;" width="9" height="8" viewBox="0 0 9 8"><path d="M0.6 4 H7.2 M4.4 1.2 L7.4 4 L4.4 6.8" fill="none" stroke="#fff" stroke-width="1.25"/></svg>
<span class="t" style="left:360.80px;top:202px;font-size:10px;color:#fff;transform:scaleX(0.9533);-webkit-text-stroke:0.25px #fff;">MUSIC BOX</span>
<div style="left:344px;top:220px;width:119px;height:414.8px;background:#f0f6f7;"></div>
<div style="left:463px;top:220px;width:394px;height:414.5px;background:linear-gradient(90deg,#a9bec6 0,#bdd0d6 4px,#cddde1 11px,#d2e0e4 22px,#d2e0e4 100%);"></div>
<svg style="left:350.7px;top:226px;" width="103" height="90" viewBox="0 0 103 90"><rect x="0.6" y="0.6" width="101.8" height="88.8" rx="7" ry="7" fill="#e3e8ea" stroke="#b9cad2" stroke-width="1.2"/>
<path d="M7.5 85.5 Q5.3 85.5 5.3 83.3 V17 Q5.3 15 7.5 15 H31 Q36 15 38.5 10.5 Q41 6 45.5 6 H96 Q98.3 6 98.3 8.2 V83.3 Q98.3 85.5 96 85.5Z" fill="#fff" stroke="#c3ccd1" stroke-width="0.9"/>
<clipPath id="vc"><path d="M7.6 17.3 H31.5 Q38 17.3 40.8 12 Q43 8.4 46.5 8.4 H96 V83.3 H7.6Z"/></clipPath>
<g clip-path="url(#vc)">
<rect x="5" y="6" width="95" height="82" fill="#fff"/>
<polygon points="46.1,8.0 39.5,15.3 31.9,19.6 29.7,31.1 25.5,39.7 24.0,47.6 27.3,56.7 35.8,60.9 50.4,62.8 95.4,72.5 95.4,8.0" fill="#8b1b6b"/>
<polygon points="35.8,17.8 33.1,20.8 32.4,30.5 34.8,25.7" fill="#fff"/>
<polygon points="86.9,14.1 95.4,10.5 95.4,67.6 89.9,56.7 90.6,36.0" fill="#7a1560"/>
<polygon points="56.5,41.5 67.4,48.2 84.5,53.0 89.9,36.0 89.9,23.8 77.2,39.7" fill="#e3bd8b"/>
<path d="M48.6,21.4 L49.4,34.8 Q51.6,39.7 57.7,42.1 L71.1,46.3 Q84.5,48.2 88.7,36.0 L89.3,22.6 L84.5,9.8 L57.7,12.9 Z" fill="#f6dbab"/>
<polygon points="83.3,17.8 89.9,22.6 89.3,37.2 84.5,48.2 83.3,36.0" fill="#e8c494"/>
<polygon points="46.1,8.0 95.4,8.0 95.4,12.9 86.9,15.3 84.5,9.8 72.3,10.7 62.6,14.1 54.1,17.8 48.6,23.8 47.4,15.3" fill="#8b1b6b"/>
<polygon points="54.1,11.7 67.4,9.2 65.0,12.3 56.5,14.7" fill="#a23a84"/>
<path d="M53.8,24.4 Q57.1,21.4 60.7,23.2 L60.1,24.8 Q57.1,23.6 54.7,26.0Z" fill="#2c2424"/>
<path d="M68.9,15.9 Q72.3,12.9 76.0,14.1 L75.5,15.7 Q72.3,14.8 69.9,17.5Z" fill="#2c2424"/>
<path d="M52.8,20.8 Q56.5,18.4 60.1,19.6" stroke="#6a4a3a" stroke-width="0.7" fill="none"/>
<path d="M67.4,12.9 Q71.1,10.7 75.3,11.4" stroke="#6a4a3a" stroke-width="0.7" fill="none"/>
<polygon points="68.0,25.7 72.3,29.9 67.4,31.4" fill="#e3bd8b"/>
<ellipse cx="76.0" cy="38.2" rx="7.8" ry="6.2" fill="#f2660e" transform="rotate(-25 76.0 38.2)"/>
<ellipse cx="76.3" cy="38.7" rx="6" ry="4.6" fill="#e2527c" transform="rotate(-25 76.3 38.7)"/>
<path d="M69.6,38.2 Q73.5,32.4 82.0,33.8 Q77.2,36.0 71.1,40.3Z" fill="#fff"/>
<polygon points="20.0,84.7 25.5,77.4 35.8,60.3 51.6,59.7 57.7,68.9 52.8,84.7" fill="#d23a7a"/>
<polygon points="80.8,84.7 83.3,67.6 90.6,60.3 95.4,67.6 95.4,84.7" fill="#d23a7a"/>
<polygon points="49.2,59.1 56.5,56.7 60.1,62.8 56.5,70.1" fill="#6e1a52"/>
<polygon points="60.7,66.4 68.0,71.3 57.7,84.7 49.2,84.7" fill="#bcbcbc"/>
<path d="M56.5,67.6 Q60.1,60.3 67.4,62.8 L77.2,62.8 Q83.3,56.7 85.1,60.3 L83.3,72.5 L80.8,84.7 L60.1,84.7 Q54.7,77.4 56.5,67.6Z" fill="#f6dbab"/>
<path d="M57.7,71.3 Q65.0,67.6 72.3,71.3 M57.7,76.2 Q65.0,73.1 71.7,76.4" stroke="#dcb884" stroke-width="0.9" fill="none"/>
<g transform="rotate(-38 72.3 54.5)"><rect x="61.8" y="46.5" width="21" height="16.5" rx="7.5" fill="#a2a2a2"/><rect x="65.3" y="49.0" width="1.5" height="9" fill="#6e6e6e"/><rect x="68.9" y="49.0" width="1.5" height="9" fill="#6e6e6e"/><rect x="72.5" y="49.0" width="1.5" height="9" fill="#6e6e6e"/><rect x="76.1" y="49.0" width="1.5" height="9" fill="#6e6e6e"/></g>
<polygon points="62.6,62.8 72.3,60.3 77.2,62.8 67.4,67.6" fill="#f6dbab"/>
<path d="M6.6,63.4 L11.5,60.1 Q15.7,65.2 18.8,74.9 L21.8,84.7 L6.6,84.7Z" fill="#f6dbab"/>
</g>
<!-- VOD tab -->
<g fill="none" stroke="#1a7e96" stroke-width="1.1"><rect x="7.8" y="6.4" width="6.8" height="4.8" rx="1"/><path d="M9.4 3.6 L11 6.2 L12.8 3.6"/><path d="M9 12.4 h1 M12.4 12.4 h1"/></g></svg>
<span class="t" style="left:371.30px;top:233px;font-size:6.5px;color:#1a7e96;font-weight:bold;letter-spacing:1.2px;transform:scaleX(1.0008);">VOD</span>
<svg style="left:353.6px;top:321.4px;" width="9" height="8" viewBox="0 0 9 8"><path d="M0.2 0.3 L4.2 3.5 L0.2 6.7 V4.7 L1.9 3.5 L0.2 2.3Z M5.2 0.3 H7.2 V6.7 H5.2Z" fill="#12a4b8"/></svg>
<span class="t" style="left:366.80px;top:320px;font-size:11px;color:#111;font-weight:bold;font-style:italic;transform:scaleX(1.0912);">Less Than Jake</span>
<span class="t" style="left:366.20px;top:331px;font-size:11px;color:#8c8c8c;transform:scaleX(0.9598);">"Break Down"</span>
<span class="t" style="left:370.00px;top:342px;font-size:11px;color:#8c8c8c;transform:scaleX(0.9941);">Less Than Jake</span>
<svg style="left:352px;top:366px;" width="106" height="20" viewBox="0 0 106 20"><polygon points="4.5,0.5 105,0.5 105,14.5 100.5,19 0.5,19 0.5,4.5" fill="#e6e6e6" stroke="#9a9a9a" stroke-width="1"/><polyline points="0.5,19.3 100.7,19.3 105.3,14.6" fill="none" stroke="#7a7a7a" stroke-width="1"/></svg>
<svg style="left:358.5px;top:362.8px;" width="18" height="18.5" viewBox="0 0 18 18.5"><path d="M0.6 0.6 H13.4 L17.2 4.2 V17.6 H0.6Z" fill="#fff" stroke="#ee1414" stroke-width="1.2"/><rect x="0.6" y="0.6" width="3.9" height="17" fill="#ee1414"/><path d="M13.3 0.6 L17.2 4.2 V17.6 H13.3Z" fill="#ee1414"/><rect x="1.6" y="2.0" width="1.9" height="1.9" fill="#fff"/><rect x="1.6" y="5.6" width="1.9" height="1.9" fill="#fff"/><rect x="1.6" y="9.2" width="1.9" height="1.9" fill="#fff"/><rect x="1.6" y="12.8" width="1.9" height="1.9" fill="#fff"/><rect x="1.6" y="16.4" width="1.9" height="1.9" fill="#fff"/><rect x="14.3" y="5.6" width="1.9" height="1.9" fill="#fff"/><rect x="14.3" y="9.2" width="1.9" height="1.9" fill="#fff"/><rect x="14.3" y="12.8" width="1.9" height="1.9" fill="#fff"/><rect x="14.3" y="16.4" width="1.9" height="1.9" fill="#fff"/></svg>
<span class="t" style="left:384.70px;top:371px;font-size:10px;color:#444;transform:scaleX(0.8727);text-shadow:0 0 0.4px #444;">MUSIC VIDEO</span>
<svg style="left:352px;top:394px;" width="106" height="20" viewBox="0 0 106 20"><polygon points="4.5,0.5 105,0.5 105,14.5 100.5,19 0.5,19 0.5,4.5" fill="#e6e6e6" stroke="#9a9a9a" stroke-width="1"/><polyline points="0.5,19.3 100.7,19.3 105.3,14.6" fill="none" stroke="#7a7a7a" stroke-width="1"/></svg>
<svg style="left:358.5px;top:390.8px;" width="18" height="18.5" viewBox="0 0 18 18.5"><path d="M0.6 0.6 H13 L17.2 4.6 V17.4 H0.6Z" fill="#fff" stroke="#ee1414" stroke-width="1.2"/><path d="M2.5 3 H5 L7 11.5 H13.5 L15 5.5 H5.6" fill="none" stroke="#ee1414" stroke-width="1.3"/><path d="M7 7 H14.5 M7.4 9 H14 M8.5 5.5 V11 M10.5 5.5 V11 M12.5 5.5 V11" stroke="#ee1414" stroke-width="0.6"/><path d="M3 12.6 H14.8 V16 H3Z" fill="#ee1414"/><circle cx="6.4" cy="15.4" r="1.3" fill="#fff"/><circle cx="12" cy="15.4" r="1.3" fill="#fff"/></svg>
<span class="t" style="left:384.70px;top:399px;font-size:10px;color:#444;transform:scaleX(0.8771);text-shadow:0 0 0.4px #444;">SHOPPING</span>
<svg style="left:478.4px;top:226.5px;" width="373" height="28" viewBox="0 0 373 28"><polygon points="6,0.5 372,0.5 372,22 367.5,26.5 0.5,26.5 0.5,6" fill="#eaeaea" stroke="#888" stroke-width="1"/><polygon points="17.5,1 108,1 124.8,26 33.2,26" fill="#4bb8c0"/><polyline points="0.5,26.8 367.6,26.8 372.3,22.1" fill="none" stroke="#666" stroke-width="0.8"/></svg>
<span class="t" style="left:520.30px;top:237px;font-size:10px;color:#fff;transform:scaleX(0.9676);-webkit-text-stroke:0.25px #fff;">MUSIC LIST</span>
<span class="t" style="left:624.60px;top:236px;font-size:11.5px;color:#111;transform:scaleX(0.9402);">Still Ghetto _ Greatest Hits</span>
<div style="left:480.5px;top:268.5px;width:369px;height:343.5px;background:#f1f7f8;"></div>
<div style="left:481px;top:290.9px;width:368.5px;height:1px;background:#dce7ea;"></div>
<span class="t" style="left:491.90px;top:275px;font-size:12px;color:#1796a4;font-weight:bold;transform:scaleX(0.8840);-webkit-text-stroke:0.2px #1796a4;">1</span>
<span class="t" style="left:510.00px;top:276px;font-size:11px;color:#1c1c1c;transform:scaleX(1.0118);-webkit-text-stroke:0.15px #1c1c1c;">All The Things She Said</span>
<svg style="left:727.4px;top:276.3px;" width="11" height="11" viewBox="0 0 11 11"><rect x="0" y="0" width="10.6" height="10.6" fill="#e9e5dc"/><rect x="0" y="0" width="9.8" height="9.8" fill="#6e6e6e"/><rect x="0.9" y="0.9" width="9.7" height="9.7" fill="#f4f2ec"/><rect x="0.9" y="0.9" width="8.6" height="8.6" fill="#3c3c3c"/><rect x="1.9" y="1.9" width="7.8" height="7.8" fill="#fff"/></svg>
<svg style="left:747.0px;top:275.3px;" width="20.5" height="13" viewBox="0 0 20.5 13"><polygon points="5.6,0.5 19.5,0.5 19.5,6.6 14.4,12 0.5,12 0.5,5.8" fill="#f1cfd0" stroke="#808080" stroke-width="0.9"/><polyline points="0.8,12.2 14.5,12.2 19.7,6.7" fill="none" stroke="#b86068" stroke-width="1"/><polyline points="1.4,11 1.4,6.1 5.9,1.4 18.6,1.4" fill="none" stroke="#fff" stroke-opacity="0.55" stroke-width="0.8"/><rect x="7.6" y="3.2" width="1.5" height="6.2" fill="#3d78a0"/><path d="M10 3.6 L13.2 6.3 L10 9Z" fill="#3d78a0" opacity="0.75"/></svg>
<svg style="left:772.8px;top:275.3px;" width="20.5" height="13" viewBox="0 0 20.5 13"><polygon points="5.6,0.5 19.5,0.5 19.5,6.6 14.4,12 0.5,12 0.5,5.8" fill="#f5c6a2" stroke="#808080" stroke-width="0.9"/><polyline points="0.8,12.2 14.5,12.2 19.7,6.7" fill="none" stroke="#b87848" stroke-width="1"/><polyline points="1.4,11 1.4,6.1 5.9,1.4 18.6,1.4" fill="none" stroke="#fff" stroke-opacity="0.55" stroke-width="0.8"/><path d="M6 9.4 H13.6 V7.4 M6 9.4 V7.8" stroke="#3d78a0" stroke-width="1.2" fill="none"/><path d="M13.8 4.2 H8.6" stroke="#3d78a0" stroke-width="1.2" fill="none"/><path d="M9.6 2.4 L6.6 4.3 L9.6 6.2Z" fill="#3d78a0"/></svg>
<svg style="left:797.6px;top:275.3px;" width="20.5" height="13" viewBox="0 0 20.5 13"><polygon points="5.6,0.5 19.5,0.5 19.5,6.6 14.4,12 0.5,12 0.5,5.8" fill="#f8e4a0" stroke="#808080" stroke-width="0.9"/><polyline points="0.8,12.2 14.5,12.2 19.7,6.7" fill="none" stroke="#b89838" stroke-width="1"/><polyline points="1.4,11 1.4,6.1 5.9,1.4 18.6,1.4" fill="none" stroke="#fff" stroke-opacity="0.55" stroke-width="0.8"/><rect x="7.6" y="2.8" width="5" height="6.8" fill="none" stroke="#3d78a0" stroke-width="1.1"/><path d="M9.2 4.8 h1.8 M9.2 6.2 h1.8 M9.2 7.6 h1.8" stroke="#3d78a0" stroke-width="0.9"/></svg>
<svg style="left:822.7px;top:275.3px;" width="20.5" height="13" viewBox="0 0 20.5 13"><polygon points="5.6,0.5 19.5,0.5 19.5,6.6 14.4,12 0.5,12 0.5,5.8" fill="#e5f38a" stroke="#808080" stroke-width="0.9"/><polyline points="0.8,12.2 14.5,12.2 19.7,6.7" fill="none" stroke="#90a030" stroke-width="1"/><polyline points="1.4,11 1.4,6.1 5.9,1.4 18.6,1.4" fill="none" stroke="#fff" stroke-opacity="0.55" stroke-width="0.8"/><path d="M5.6 3 H11.4 L9.2 5.6 V9.6 H7.8 V5.6Z" fill="#3d78a0"/><rect x="11" y="8.2" width="1.2" height="1.4" fill="#3d78a0"/><rect x="12.8" y="6.6" width="1.2" height="3" fill="#3d78a0"/><rect x="14.6" y="5" width="1.2" height="4.6" fill="#3d78a0"/></svg>
<div style="left:481px;top:310.3px;width:368.5px;height:1px;background:#dce7ea;"></div>
<span class="t" style="left:491.90px;top:295px;font-size:12px;color:#1796a4;font-weight:bold;transform:scaleX(0.8840);-webkit-text-stroke:0.2px #1796a4;">2</span>
<span class="t" style="left:510.00px;top:296px;font-size:11px;color:#1c1c1c;transform:scaleX(1.0113);-webkit-text-stroke:0.15px #1c1c1c;">As Long As You Love Me</span>
<svg style="left:727.4px;top:295.7px;" width="11" height="11" viewBox="0 0 11 11"><rect x="0" y="0" width="10.6" height="10.6" fill="#e9e5dc"/><rect x="0" y="0" width="9.8" height="9.8" fill="#6e6e6e"/><rect x="0.9" y="0.9" width="9.7" height="9.7" fill="#f4f2ec"/><rect x="0.9" y="0.9" width="8.6" height="8.6" fill="#3c3c3c"/><rect x="1.9" y="1.9" width="7.8" height="7.8" fill="#fff"/></svg>
<svg style="left:747.0px;top:294.7px;" width="20.5" height="13" viewBox="0 0 20.5 13"><polygon points="5.6,0.5 19.5,0.5 19.5,6.6 14.4,12 0.5,12 0.5,5.8" fill="#f1cfd0" stroke="#808080" stroke-width="0.9"/><polyline points="0.8,12.2 14.5,12.2 19.7,6.7" fill="none" stroke="#b86068" stroke-width="1"/><polyline points="1.4,11 1.4,6.1 5.9,1.4 18.6,1.4" fill="none" stroke="#fff" stroke-opacity="0.55" stroke-width="0.8"/><rect x="7.6" y="3.2" width="1.5" height="6.2" fill="#3d78a0"/><path d="M10 3.6 L13.2 6.3 L10 9Z" fill="#3d78a0" opacity="0.75"/></svg>
<svg style="left:772.8px;top:294.7px;" width="20.5" height="13" viewBox="0 0 20.5 13"><polygon points="5.6,0.5 19.5,0.5 19.5,6.6 14.4,12 0.5,12 0.5,5.8" fill="#f5c6a2" stroke="#808080" stroke-width="0.9"/><polyline points="0.8,12.2 14.5,12.2 19.7,6.7" fill="none" stroke="#b87848" stroke-width="1"/><polyline points="1.4,11 1.4,6.1 5.9,1.4 18.6,1.4" fill="none" stroke="#fff" stroke-opacity="0.55" stroke-width="0.8"/><path d="M6 9.4 H13.6 V7.4 M6 9.4 V7.8" stroke="#3d78a0" stroke-width="1.2" fill="none"/><path d="M13.8 4.2 H8.6" stroke="#3d78a0" stroke-width="1.2" fill="none"/><path d="M9.6 2.4 L6.6 4.3 L9.6 6.2Z" fill="#3d78a0"/></svg>
<svg style="left:797.6px;top:294.7px;" width="20.5" height="13" viewBox="0 0 20.5 13"><polygon points="5.6,0.5 19.5,0.5 19.5,6.6 14.4,12 0.5,12 0.5,5.8" fill="#f8e4a0" stroke="#808080" stroke-width="0.9"/><polyline points="0.8,12.2 14.5,12.2 19.7,6.7" fill="none" stroke="#b89838" stroke-width="1"/><polyline points="1.4,11 1.4,6.1 5.9,1.4 18.6,1.4" fill="none" stroke="#fff" stroke-opacity="0.55" stroke-width="0.8"/><rect x="7.6" y="2.8" width="5" height="6.8" fill="none" stroke="#3d78a0" stroke-width="1.1"/><path d="M9.2 4.8 h1.8 M9.2 6.2 h1.8 M9.2 7.6 h1.8" stroke="#3d78a0" stroke-width="0.9"/></svg>
<svg style="left:822.7px;top:294.7px;" width="20.5" height="13" viewBox="0 0 20.5 13"><polygon points="5.6,0.5 19.5,0.5 19.5,6.6 14.4,12 0.5,12 0.5,5.8" fill="#e5f38a" stroke="#808080" stroke-width="0.9"/><polyline points="0.8,12.2 14.5,12.2 19.7,6.7" fill="none" stroke="#90a030" stroke-width="1"/><polyline points="1.4,11 1.4,6.1 5.9,1.4 18.6,1.4" fill="none" stroke="#fff" stroke-opacity="0.55" stroke-width="0.8"/><path d="M5.6 3 H11.4 L9.2 5.6 V9.6 H7.8 V5.6Z" fill="#3d78a0"/><rect x="11" y="8.2" width="1.2" height="1.4" fill="#3d78a0"/><rect x="12.8" y="6.6" width="1.2" height="3" fill="#3d78a0"/><rect x="14.6" y="5" width="1.2" height="4.6" fill="#3d78a0"/></svg>
<div style="left:481px;top:329.7px;width:368.5px;height:1px;background:#dce7ea;"></div>
<span class="t" style="left:491.90px;top:314px;font-size:12px;color:#1796a4;font-weight:bold;transform:scaleX(0.8840);-webkit-text-stroke:0.2px #1796a4;">3</span>
<span class="t" style="left:510.00px;top:315px;font-size:11px;color:#1c1c1c;transform:scaleX(1.0140);-webkit-text-stroke:0.15px #1c1c1c;">Tide Is High (Get The Feeling)</span>
<svg style="left:727.4px;top:315.1px;" width="11" height="11" viewBox="0 0 11 11"><rect x="0" y="0" width="10.6" height="10.6" fill="#e9e5dc"/><rect x="0" y="0" width="9.8" height="9.8" fill="#6e6e6e"/><rect x="0.9" y="0.9" width="9.7" height="9.7" fill="#f4f2ec"/><rect x="0.9" y="0.9" width="8.6" height="8.6" fill="#3c3c3c"/><rect x="1.9" y="1.9" width="7.8" height="7.8" fill="#fff"/></svg>
<svg style="left:747.0px;top:314.1px;" width="20.5" height="13" viewBox="0 0 20.5 13"><polygon points="5.6,0.5 19.5,0.5 19.5,6.6 14.4,12 0.5,12 0.5,5.8" fill="#f1cfd0" stroke="#808080" stroke-width="0.9"/><polyline points="0.8,12.2 14.5,12.2 19.7,6.7" fill="none" stroke="#b86068" stroke-width="1"/><polyline points="1.4,11 1.4,6.1 5.9,1.4 18.6,1.4" fill="none" stroke="#fff" stroke-opacity="0.55" stroke-width="0.8"/><rect x="7.6" y="3.2" width="1.5" height="6.2" fill="#3d78a0"/><path d="M10 3.6 L13.2 6.3 L10 9Z" fill="#3d78a0" opacity="0.75"/></svg>
<svg style="left:772.8px;top:314.1px;" width="20.5" height="13" viewBox="0 0 20.5 13"><polygon points="5.6,0.5 19.5,0.5 19.5,6.6 14.4,12 0.5,12 0.5,5.8" fill="#f5c6a2" stroke="#808080" stroke-width="0.9"/><polyline points="0.8,12.2 14.5,12.2 19.7,6.7" fill="none" stroke="#b87848" stroke-width="1"/><polyline points="1.4,11 1.4,6.1 5.9,1.4 18.6,1.4" fill="none" stroke="#fff" stroke-opacity="0.55" stroke-width="0.8"/><path d="M6 9.4 H13.6 V7.4 M6 9.4 V7.8" stroke="#3d78a0" stroke-width="1.2" fill="none"/><path d="M13.8 4.2 H8.6" stroke="#3d78a0" stroke-width="1.2" fill="none"/><path d="M9.6 2.4 L6.6 4.3 L9.6 6.2Z" fill="#3d78a0"/></svg>
<svg style="left:797.6px;top:314.1px;" width="20.5" height="13" viewBox="0 0 20.5 13"><polygon points="5.6,0.5 19.5,0.5 19.5,6.6 14.4,12 0.5,12 0.5,5.8" fill="#f8e4a0" stroke="#808080" stroke-width="0.9"/><polyline points="0.8,12.2 14.5,12.2 19.7,6.7" fill="none" stroke="#b89838" stroke-width="1"/><polyline points="1.4,11 1.4,6.1 5.9,1.4 18.6,1.4" fill="none" stroke="#fff" stroke-opacity="0.55" stroke-width="0.8"/><rect x="7.6" y="2.8" width="5" height="6.8" fill="none" stroke="#3d78a0" stroke-width="1.1"/><path d="M9.2 4.8 h1.8 M9.2 6.2 h1.8 M9.2 7.6 h1.8" stroke="#3d78a0" stroke-width="0.9"/></svg>
<svg style="left:822.7px;top:314.1px;" width="20.5" height="13" viewBox="0 0 20.5 13"><polygon points="5.6,0.5 19.5,0.5 19.5,6.6 14.4,12 0.5,12 0.5,5.8" fill="#e5f38a" stroke="#808080" stroke-width="0.9"/><polyline points="0.8,12.2 14.5,12.2 19.7,6.7" fill="none" stroke="#90a030" stroke-width="1"/><polyline points="1.4,11 1.4,6.1 5.9,1.4 18.6,1.4" fill="none" stroke="#fff" stroke-opacity="0.55" stroke-width="0.8"/><path d="M5.6 3 H11.4 L9.2 5.6 V9.6 H7.8 V5.6Z" fill="#3d78a0"/><rect x="11" y="8.2" width="1.2" height="1.4" fill="#3d78a0"/><rect x="12.8" y="6.6" width="1.2" height="3" fill="#3d78a0"/><rect x="14.6" y="5" width="1.2" height="4.6" fill="#3d78a0"/></svg>
<div style="left:481px;top:349.1px;width:368.5px;height:1px;background:#dce7ea;"></div>
<span class="t" style="left:491.90px;top:334px;font-size:12px;color:#1796a4;font-weight:bold;transform:scaleX(0.8840);-webkit-text-stroke:0.2px #1796a4;">4</span>
<span class="t" style="left:510.00px;top:335px;font-size:11px;color:#1c1c1c;transform:scaleX(1.0215);-webkit-text-stroke:0.15px #1c1c1c;">I Want It That Way</span>
<svg style="left:727.4px;top:334.5px;" width="11" height="11" viewBox="0 0 11 11"><rect x="0" y="0" width="10.6" height="10.6" fill="#e9e5dc"/><rect x="0" y="0" width="9.8" height="9.8" fill="#6e6e6e"/><rect x="0.9" y="0.9" width="9.7" height="9.7" fill="#f4f2ec"/><rect x="0.9" y="0.9" width="8.6" height="8.6" fill="#3c3c3c"/><rect x="1.9" y="1.9" width="7.8" height="7.8" fill="#fff"/></svg>
<svg style="left:747.0px;top:333.5px;" width="20.5" height="13" viewBox="0 0 20.5 13"><polygon points="5.6,0.5 19.5,0.5 19.5,6.6 14.4,12 0.5,12 0.5,5.8" fill="#f1cfd0" stroke="#808080" stroke-width="0.9"/><polyline points="0.8,12.2 14.5,12.2 19.7,6.7" fill="none" stroke="#b86068" stroke-width="1"/><polyline points="1.4,11 1.4,6.1 5.9,1.4 18.6,1.4" fill="none" stroke="#fff" stroke-opacity="0.55" stroke-width="0.8"/><rect x="7.6" y="3.2" width="1.5" height="6.2" fill="#3d78a0"/><path d="M10 3.6 L13.2 6.3 L10 9Z" fill="#3d78a0" opacity="0.75"/></svg>
<svg style="left:772.8px;top:333.5px;" width="20.5" height="13" viewBox="0 0 20.5 13"><polygon points="5.6,0.5 19.5,0.5 19.5,6.6 14.4,12 0.5,12 0.5,5.8" fill="#f5c6a2" stroke="#808080" stroke-width="0.9"/><polyline points="0.8,12.2 14.5,12.2 19.7,6.7" fill="none" stroke="#b87848" stroke-width="1"/><polyline points="1.4,11 1.4,6.1 5.9,1.4 18.6,1.4" fill="none" stroke="#fff" stroke-opacity="0.55" stroke-width="0.8"/><path d="M6 9.4 H13.6 V7.4 M6 9.4 V7.8" stroke="#3d78a0" stroke-width="1.2" fill="none"/><path d="M13.8 4.2 H8.6" stroke="#3d78a0" stroke-width="1.2" fill="none"/><path d="M9.6 2.4 L6.6 4.3 L9.6 6.2Z" fill="#3d78a0"/></svg>
<svg style="left:797.6px;top:333.5px;" width="20.5" height="13" viewBox="0 0 20.5 13"><polygon points="5.6,0.5 19.5,0.5 19.5,6.6 14.4,12 0.5,12 0.5,5.8" fill="#f8e4a0" stroke="#808080" stroke-width="0.9"/><polyline points="0.8,12.2 14.5,12.2 19.7,6.7" fill="none" stroke="#b89838" stroke-width="1"/><polyline points="1.4,11 1.4,6.1 5.9,1.4 18.6,1.4" fill="none" stroke="#fff" stroke-opacity="0.55" stroke-width="0.8"/><rect x="7.6" y="2.8" width="5" height="6.8" fill="none" stroke="#3d78a0" stroke-width="1.1"/><path d="M9.2 4.8 h1.8 M9.2 6.2 h1.8 M9.2 7.6 h1.8" stroke="#3d78a0" stroke-width="0.9"/></svg>
<svg style="left:822.7px;top:333.5px;" width="20.5" height="13" viewBox="0 0 20.5 13"><polygon points="5.6,0.5 19.5,0.5 19.5,6.6 14.4,12 0.5,12 0.5,5.8" fill="#e5f38a" stroke="#808080" stroke-width="0.9"/><polyline points="0.8,12.2 14.5,12.2 19.7,6.7" fill="none" stroke="#90a030" stroke-width="1"/><polyline points="1.4,11 1.4,6.1 5.9,1.4 18.6,1.4" fill="none" stroke="#fff" stroke-opacity="0.55" stroke-width="0.8"/><path d="M5.6 3 H11.4 L9.2 5.6 V9.6 H7.8 V5.6Z" fill="#3d78a0"/><rect x="11" y="8.2" width="1.2" height="1.4" fill="#3d78a0"/><rect x="12.8" y="6.6" width="1.2" height="3" fill="#3d78a0"/><rect x="14.6" y="5" width="1.2" height="4.6" fill="#3d78a0"/></svg>
<div style="left:481px;top:368.5px;width:368.5px;height:1px;background:#dce7ea;"></div>
<span class="t" style="left:491.90px;top:353px;font-size:12px;color:#1796a4;font-weight:bold;transform:scaleX(0.8840);-webkit-text-stroke:0.2px #1796a4;">5</span>
<span class="t" style="left:510.00px;top:354px;font-size:11px;color:#1c1c1c;transform:scaleX(0.9758);-webkit-text-stroke:0.15px #1c1c1c;">Show Me Love</span>
<svg style="left:727.4px;top:353.9px;" width="11" height="11" viewBox="0 0 11 11"><rect x="0" y="0" width="10.6" height="10.6" fill="#e9e5dc"/><rect x="0" y="0" width="9.8" height="9.8" fill="#6e6e6e"/><rect x="0.9" y="0.9" width="9.7" height="9.7" fill="#f4f2ec"/><rect x="0.9" y="0.9" width="8.6" height="8.6" fill="#3c3c3c"/><rect x="1.9" y="1.9" width="7.8" height="7.8" fill="#fff"/></svg>
<svg style="left:747.0px;top:352.9px;" width="20.5" height="13" viewBox="0 0 20.5 13"><polygon points="5.6,0.5 19.5,0.5 19.5,6.6 14.4,12 0.5,12 0.5,5.8" fill="#f1cfd0" stroke="#808080" stroke-width="0.9"/><polyline points="0.8,12.2 14.5,12.2 19.7,6.7" fill="none" stroke="#b86068" stroke-width="1"/><polyline points="1.4,11 1.4,6.1 5.9,1.4 18.6,1.4" fill="none" stroke="#fff" stroke-opacity="0.55" stroke-width="0.8"/><rect x="7.6" y="3.2" width="1.5" height="6.2" fill="#3d78a0"/><path d="M10 3.6 L13.2 6.3 L10 9Z" fill="#3d78a0" opacity="0.75"/></svg>
<svg style="left:772.8px;top:352.9px;" width="20.5" height="13" viewBox="0 0 20.5 13"><polygon points="5.6,0.5 19.5,0.5 19.5,6.6 14.4,12 0.5,12 0.5,5.8" fill="#f5c6a2" stroke="#808080" stroke-width="0.9"/><polyline points="0.8,12.2 14.5,12.2 19.7,6.7" fill="none" stroke="#b87848" stroke-width="1"/><polyline points="1.4,11 1.4,6.1 5.9,1.4 18.6,1.4" fill="none" stroke="#fff" stroke-opacity="0.55" stroke-width="0.8"/><path d="M6 9.4 H13.6 V7.4 M6 9.4 V7.8" stroke="#3d78a0" stroke-width="1.2" fill="none"/><path d="M13.8 4.2 H8.6" stroke="#3d78a0" stroke-width="1.2" fill="none"/><path d="M9.6 2.4 L6.6 4.3 L9.6 6.2Z" fill="#3d78a0"/></svg>
<svg style="left:797.6px;top:352.9px;" width="20.5" height="13" viewBox="0 0 20.5 13"><polygon points="5.6,0.5 19.5,0.5 19.5,6.6 14.4,12 0.5,12 0.5,5.8" fill="#f8e4a0" stroke="#808080" stroke-width="0.9"/><polyline points="0.8,12.2 14.5,12.2 19.7,6.7" fill="none" stroke="#b89838" stroke-width="1"/><polyline points="1.4,11 1.4,6.1 5.9,1.4 18.6,1.4" fill="none" stroke="#fff" stroke-opacity="0.55" stroke-width="0.8"/><rect x="7.6" y="2.8" width="5" height="6.8" fill="none" stroke="#3d78a0" stroke-width="1.1"/><path d="M9.2 4.8 h1.8 M9.2 6.2 h1.8 M9.2 7.6 h1.8" stroke="#3d78a0" stroke-width="0.9"/></svg>
<svg style="left:822.7px;top:352.9px;" width="20.5" height="13" viewBox="0 0 20.5 13"><polygon points="5.6,0.5 19.5,0.5 19.5,6.6 14.4,12 0.5,12 0.5,5.8" fill="#e5f38a" stroke="#808080" stroke-width="0.9"/><polyline points="0.8,12.2 14.5,12.2 19.7,6.7" fill="none" stroke="#90a030" stroke-width="1"/><polyline points="1.4,11 1.4,6.1 5.9,1.4 18.6,1.4" fill="none" stroke="#fff" stroke-opacity="0.55" stroke-width="0.8"/><path d="M5.6 3 H11.4 L9.2 5.6 V9.6 H7.8 V5.6Z" fill="#3d78a0"/><rect x="11" y="8.2" width="1.2" height="1.4" fill="#3d78a0"/><rect x="12.8" y="6.6" width="1.2" height="3" fill="#3d78a0"/><rect x="14.6" y="5" width="1.2" height="4.6" fill="#3d78a0"/></svg>
<div style="left:481px;top:387.9px;width:368.5px;height:1px;background:#dce7ea;"></div>
<span class="t" style="left:491.90px;top:372px;font-size:12px;color:#1796a4;font-weight:bold;transform:scaleX(0.8840);-webkit-text-stroke:0.2px #1796a4;">6</span>
<span class="t" style="left:510.00px;top:373px;font-size:11px;color:#1c1c1c;transform:scaleX(1.0393);-webkit-text-stroke:0.15px #1c1c1c;">Lose yourself</span>
<svg style="left:727.4px;top:373.3px;" width="11" height="11" viewBox="0 0 11 11"><rect x="0" y="0" width="10.6" height="10.6" fill="#e9e5dc"/><rect x="0" y="0" width="9.8" height="9.8" fill="#6e6e6e"/><rect x="0.9" y="0.9" width="9.7" height="9.7" fill="#f4f2ec"/><rect x="0.9" y="0.9" width="8.6" height="8.6" fill="#3c3c3c"/><rect x="1.9" y="1.9" width="7.8" height="7.8" fill="#fff"/></svg>
<svg style="left:747.0px;top:372.3px;" width="20.5" height="13" viewBox="0 0 20.5 13"><polygon points="5.6,0.5 19.5,0.5 19.5,6.6 14.4,12 0.5,12 0.5,5.8" fill="#f1cfd0" stroke="#808080" stroke-width="0.9"/><polyline points="0.8,12.2 14.5,12.2 19.7,6.7" fill="none" stroke="#b86068" stroke-width="1"/><polyline points="1.4,11 1.4,6.1 5.9,1.4 18.6,1.4" fill="none" stroke="#fff" stroke-opacity="0.55" stroke-width="0.8"/><rect x="7.6" y="3.2" width="1.5" height="6.2" fill="#3d78a0"/><path d="M10 3.6 L13.2 6.3 L10 9Z" fill="#3d78a0" opacity="0.75"/></svg>
<svg style="left:772.8px;top:372.3px;" width="20.5" height="13" viewBox="0 0 20.5 13"><polygon points="5.6,0.5 19.5,0.5 19.5,6.6 14.4,12 0.5,12 0.5,5.8" fill="#f5c6a2" stroke="#808080" stroke-width="0.9"/><polyline points="0.8,12.2 14.5,12.2 19.7,6.7" fill="none" stroke="#b87848" stroke-width="1"/><polyline points="1.4,11 1.4,6.1 5.9,1.4 18.6,1.4" fill="none" stroke="#fff" stroke-opacity="0.55" stroke-width="0.8"/><path d="M6 9.4 H13.6 V7.4 M6 9.4 V7.8" stroke="#3d78a0" stroke-width="1.2" fill="none"/><path d="M13.8 4.2 H8.6" stroke="#3d78a0" stroke-width="1.2" fill="none"/><path d="M9.6 2.4 L6.6 4.3 L9.6 6.2Z" fill="#3d78a0"/></svg>
<svg style="left:797.6px;top:372.3px;" width="20.5" height="13" viewBox="0 0 20.5 13"><polygon points="5.6,0.5 19.5,0.5 19.5,6.6 14.4,12 0.5,12 0.5,5.8" fill="#f8e4a0" stroke="#808080" stroke-width="0.9"/><polyline points="0.8,12.2 14.5,12.2 19.7,6.7" fill="none" stroke="#b89838" stroke-width="1"/><polyline points="1.4,11 1.4,6.1 5.9,1.4 18.6,1.4" fill="none" stroke="#fff" stroke-opacity="0.55" stroke-width="0.8"/><rect x="7.6" y="2.8" width="5" height="6.8" fill="none" stroke="#3d78a0" stroke-width="1.1"/><path d="M9.2 4.8 h1.8 M9.2 6.2 h1.8 M9.2 7.6 h1.8" stroke="#3d78a0" stroke-width="0.9"/></svg>
<svg style="left:822.7px;top:372.3px;" width="20.5" height="13" viewBox="0 0 20.5 13"><polygon points="5.6,0.5 19.5,0.5 19.5,6.6 14.4,12 0.5,12 0.5,5.8" fill="#e5f38a" stroke="#808080" stroke-width="0.9"/><polyline points="0.8,12.2 14.5,12.2 19.7,6.7" fill="none" stroke="#90a030" stroke-width="1"/><polyline points="1.4,11 1.4,6.1 5.9,1.4 18.6,1.4" fill="none" stroke="#fff" stroke-opacity="0.55" stroke-width="0.8"/><path d="M5.6 3 H11.4 L9.2 5.6 V9.6 H7.8 V5.6Z" fill="#3d78a0"/><rect x="11" y="8.2" width="1.2" height="1.4" fill="#3d78a0"/><rect x="12.8" y="6.6" width="1.2" height="3" fill="#3d78a0"/><rect x="14.6" y="5" width="1.2" height="4.6" fill="#3d78a0"/></svg>
<div style="left:481px;top:407.3px;width:368.5px;height:1px;background:#dce7ea;"></div>
<span class="t" style="left:491.90px;top:392px;font-size:12px;color:#1796a4;font-weight:bold;transform:scaleX(0.8840);-webkit-text-stroke:0.2px #1796a4;">7</span>
<span class="t" style="left:510.00px;top:393px;font-size:11px;color:#1c1c1c;transform:scaleX(0.9887);-webkit-text-stroke:0.15px #1c1c1c;">Without Me</span>
<svg style="left:727.4px;top:392.7px;" width="11" height="11" viewBox="0 0 11 11"><rect x="0" y="0" width="10.6" height="10.6" fill="#e9e5dc"/><rect x="0" y="0" width="9.8" height="9.8" fill="#6e6e6e"/><rect x="0.9" y="0.9" width="9.7" height="9.7" fill="#f4f2ec"/><rect x="0.9" y="0.9" width="8.6" height="8.6" fill="#3c3c3c"/><rect x="1.9" y="1.9" width="7.8" height="7.8" fill="#fff"/></svg>
<svg style="left:747.0px;top:391.7px;" width="20.5" height="13" viewBox="0 0 20.5 13"><polygon points="5.6,0.5 19.5,0.5 19.5,6.6 14.4,12 0.5,12 0.5,5.8" fill="#f1cfd0" stroke="#808080" stroke-width="0.9"/><polyline points="0.8,12.2 14.5,12.2 19.7,6.7" fill="none" stroke="#b86068" stroke-width="1"/><polyline points="1.4,11 1.4,6.1 5.9,1.4 18.6,1.4" fill="none" stroke="#fff" stroke-opacity="0.55" stroke-width="0.8"/><rect x="7.6" y="3.2" width="1.5" height="6.2" fill="#3d78a0"/><path d="M10 3.6 L13.2 6.3 L10 9Z" fill="#3d78a0" opacity="0.75"/></svg>
<svg style="left:772.8px;top:391.7px;" width="20.5" height="13" viewBox="0 0 20.5 13"><polygon points="5.6,0.5 19.5,0.5 19.5,6.6 14.4,12 0.5,12 0.5,5.8" fill="#f5c6a2" stroke="#808080" stroke-width="0.9"/><polyline points="0.8,12.2 14.5,12.2 19.7,6.7" fill="none" stroke="#b87848" stroke-width="1"/><polyline points="1.4,11 1.4,6.1 5.9,1.4 18.6,1.4" fill="none" stroke="#fff" stroke-opacity="0.55" stroke-width="0.8"/><path d="M6 9.4 H13.6 V7.4 M6 9.4 V7.8" stroke="#3d78a0" stroke-width="1.2" fill="none"/><path d="M13.8 4.2 H8.6" stroke="#3d78a0" stroke-width="1.2" fill="none"/><path d="M9.6 2.4 L6.6 4.3 L9.6 6.2Z" fill="#3d78a0"/></svg>
<svg style="left:797.6px;top:391.7px;" width="20.5" height="13" viewBox="0 0 20.5 13"><polygon points="5.6,0.5 19.5,0.5 19.5,6.6 14.4,12 0.5,12 0.5,5.8" fill="#f8e4a0" stroke="#808080" stroke-width="0.9"/><polyline points="0.8,12.2 14.5,12.2 19.7,6.7" fill="none" stroke="#b89838" stroke-width="1"/><polyline points="1.4,11 1.4,6.1 5.9,1.4 18.6,1.4" fill="none" stroke="#fff" stroke-opacity="0.55" stroke-width="0.8"/><rect x="7.6" y="2.8" width="5" height="6.8" fill="none" stroke="#3d78a0" stroke-width="1.1"/><path d="M9.2 4.8 h1.8 M9.2 6.2 h1.8 M9.2 7.6 h1.8" stroke="#3d78a0" stroke-width="0.9"/></svg>
<svg style="left:822.7px;top:391.7px;" width="20.5" height="13" viewBox="0 0 20.5 13"><polygon points="5.6,0.5 19.5,0.5 19.5,6.6 14.4,12 0.5,12 0.5,5.8" fill="#e5f38a" stroke="#808080" stroke-width="0.9"/><polyline points="0.8,12.2 14.5,12.2 19.7,6.7" fill="none" stroke="#90a030" stroke-width="1"/><polyline points="1.4,11 1.4,6.1 5.9,1.4 18.6,1.4" fill="none" stroke="#fff" stroke-opacity="0.55" stroke-width="0.8"/><path d="M5.6 3 H11.4 L9.2 5.6 V9.6 H7.8 V5.6Z" fill="#3d78a0"/><rect x="11" y="8.2" width="1.2" height="1.4" fill="#3d78a0"/><rect x="12.8" y="6.6" width="1.2" height="3" fill="#3d78a0"/><rect x="14.6" y="5" width="1.2" height="4.6" fill="#3d78a0"/></svg>
<div style="left:481px;top:426.7px;width:368.5px;height:1px;background:#dce7ea;"></div>
<span class="t" style="left:491.90px;top:411px;font-size:12px;color:#1796a4;font-weight:bold;transform:scaleX(0.8840);-webkit-text-stroke:0.2px #1796a4;">8</span>
<span class="t" style="left:510.00px;top:412px;font-size:11px;color:#1c1c1c;transform:scaleX(0.9893);-webkit-text-stroke:0.15px #1c1c1c;">I Believe I Can Fly</span>
<svg style="left:727.4px;top:412.1px;" width="11" height="11" viewBox="0 0 11 11"><rect x="0" y="0" width="10.6" height="10.6" fill="#e9e5dc"/><rect x="0" y="0" width="9.8" height="9.8" fill="#6e6e6e"/><rect x="0.9" y="0.9" width="9.7" height="9.7" fill="#f4f2ec"/><rect x="0.9" y="0.9" width="8.6" height="8.6" fill="#3c3c3c"/><rect x="1.9" y="1.9" width="7.8" height="7.8" fill="#fff"/></svg>
<svg style="left:747.0px;top:411.1px;" width="20.5" height="13" viewBox="0 0 20.5 13"><polygon points="5.6,0.5 19.5,0.5 19.5,6.6 14.4,12 0.5,12 0.5,5.8" fill="#f1cfd0" stroke="#808080" stroke-width="0.9"/><polyline points="0.8,12.2 14.5,12.2 19.7,6.7" fill="none" stroke="#b86068" stroke-width="1"/><polyline points="1.4,11 1.4,6.1 5.9,1.4 18.6,1.4" fill="none" stroke="#fff" stroke-opacity="0.55" stroke-width="0.8"/><rect x="7.6" y="3.2" width="1.5" height="6.2" fill="#3d78a0"/><path d="M10 3.6 L13.2 6.3 L10 9Z" fill="#3d78a0" opacity="0.75"/></svg>
<svg style="left:772.8px;top:411.1px;" width="20.5" height="13" viewBox="0 0 20.5 13"><polygon points="5.6,0.5 19.5,0.5 19.5,6.6 14.4,12 0.5,12 0.5,5.8" fill="#f5c6a2" stroke="#808080" stroke-width="0.9"/><polyline points="0.8,12.2 14.5,12.2 19.7,6.7" fill="none" stroke="#b87848" stroke-width="1"/><polyline points="1.4,11 1.4,6.1 5.9,1.4 18.6,1.4" fill="none" stroke="#fff" stroke-opacity="0.55" stroke-width="0.8"/><path d="M6 9.4 H13.6 V7.4 M6 9.4 V7.8" stroke="#3d78a0" stroke-width="1.2" fill="none"/><path d="M13.8 4.2 H8.6" stroke="#3d78a0" stroke-width="1.2" fill="none"/><path d="M9.6 2.4 L6.6 4.3 L9.6 6.2Z" fill="#3d78a0"/></svg>
<svg style="left:797.6px;top:411.1px;" width="20.5" height="13" viewBox="0 0 20.5 13"><polygon points="5.6,0.5 19.5,0.5 19.5,6.6 14.4,12 0.5,12 0.5,5.8" fill="#f8e4a0" stroke="#808080" stroke-width="0.9"/><polyline points="0.8,12.2 14.5,12.2 19.7,6.7" fill="none" stroke="#b89838" stroke-width="1"/><polyline points="1.4,11 1.4,6.1 5.9,1.4 18.6,1.4" fill="none" stroke="#fff" stroke-opacity="0.55" stroke-width="0.8"/><rect x="7.6" y="2.8" width="5" height="6.8" fill="none" stroke="#3d78a0" stroke-width="1.1"/><path d="M9.2 4.8 h1.8 M9.2 6.2 h1.8 M9.2 7.6 h1.8" stroke="#3d78a0" stroke-width="0.9"/></svg>
<svg style="left:822.7px;top:411.1px;" width="20.5" height="13" viewBox="0 0 20.5 13"><polygon points="5.6,0.5 19.5,0.5 19.5,6.6 14.4,12 0.5,12 0.5,5.8" fill="#e5f38a" stroke="#808080" stroke-width="0.9"/><polyline points="0.8,12.2 14.5,12.2 19.7,6.7" fill="none" stroke="#90a030" stroke-width="1"/><polyline points="1.4,11 1.4,6.1 5.9,1.4 18.6,1.4" fill="none" stroke="#fff" stroke-opacity="0.55" stroke-width="0.8"/><path d="M5.6 3 H11.4 L9.2 5.6 V9.6 H7.8 V5.6Z" fill="#3d78a0"/><rect x="11" y="8.2" width="1.2" height="1.4" fill="#3d78a0"/><rect x="12.8" y="6.6" width="1.2" height="3" fill="#3d78a0"/><rect x="14.6" y="5" width="1.2" height="4.6" fill="#3d78a0"/></svg>
<div style="left:481px;top:446.1px;width:368.5px;height:1px;background:#dce7ea;"></div>
<span class="t" style="left:491.90px;top:431px;font-size:12px;color:#1796a4;font-weight:bold;transform:scaleX(0.8840);-webkit-text-stroke:0.2px #1796a4;">9</span>
<span class="t" style="left:510.00px;top:432px;font-size:11px;color:#1c1c1c;transform:scaleX(0.9929);-webkit-text-stroke:0.15px #1c1c1c;">Romeo and Juliet</span>
<svg style="left:727.4px;top:431.5px;" width="11" height="11" viewBox="0 0 11 11"><rect x="0" y="0" width="10.6" height="10.6" fill="#e9e5dc"/><rect x="0" y="0" width="9.8" height="9.8" fill="#6e6e6e"/><rect x="0.9" y="0.9" width="9.7" height="9.7" fill="#f4f2ec"/><rect x="0.9" y="0.9" width="8.6" height="8.6" fill="#3c3c3c"/><rect x="1.9" y="1.9" width="7.8" height="7.8" fill="#fff"/></svg>
<svg style="left:747.0px;top:430.5px;" width="20.5" height="13" viewBox="0 0 20.5 13"><polygon points="5.6,0.5 19.5,0.5 19.5,6.6 14.4,12 0.5,12 0.5,5.8" fill="#f1cfd0" stroke="#808080" stroke-width="0.9"/><polyline points="0.8,12.2 14.5,12.2 19.7,6.7" fill="none" stroke="#b86068" stroke-width="1"/><polyline points="1.4,11 1.4,6.1 5.9,1.4 18.6,1.4" fill="none" stroke="#fff" stroke-opacity="0.55" stroke-width="0.8"/><rect x="7.6" y="3.2" width="1.5" height="6.2" fill="#3d78a0"/><path d="M10 3.6 L13.2 6.3 L10 9Z" fill="#3d78a0" opacity="0.75"/></svg>
<svg style="left:772.8px;top:430.5px;" width="20.5" height="13" viewBox="0 0 20.5 13"><polygon points="5.6,0.5 19.5,0.5 19.5,6.6 14.4,12 0.5,12 0.5,5.8" fill="#f5c6a2" stroke="#808080" stroke-width="0.9"/><polyline points="0.8,12.2 14.5,12.2 19.7,6.7" fill="none" stroke="#b87848" stroke-width="1"/><polyline points="1.4,11 1.4,6.1 5.9,1.4 18.6,1.4" fill="none" stroke="#fff" stroke-opacity="0.55" stroke-width="0.8"/><path d="M6 9.4 H13.6 V7.4 M6 9.4 V7.8" stroke="#3d78a0" stroke-width="1.2" fill="none"/><path d="M13.8 4.2 H8.6" stroke="#3d78a0" stroke-width="1.2" fill="none"/><path d="M9.6 2.4 L6.6 4.3 L9.6 6.2Z" fill="#3d78a0"/></svg>
<svg style="left:797.6px;top:430.5px;" width="20.5" height="13" viewBox="0 0 20.5 13"><polygon points="5.6,0.5 19.5,0.5 19.5,6.6 14.4,12 0.5,12 0.5,5.8" fill="#f8e4a0" stroke="#808080" stroke-width="0.9"/><polyline points="0.8,12.2 14.5,12.2 19.7,6.7" fill="none" stroke="#b89838" stroke-width="1"/><polyline points="1.4,11 1.4,6.1 5.9,1.4 18.6,1.4" fill="none" stroke="#fff" stroke-opacity="0.55" stroke-width="0.8"/><rect x="7.6" y="2.8" width="5" height="6.8" fill="none" stroke="#3d78a0" stroke-width="1.1"/><path d="M9.2 4.8 h1.8 M9.2 6.2 h1.8 M9.2 7.6 h1.8" stroke="#3d78a0" stroke-width="0.9"/></svg>
<svg style="left:822.7px;top:430.5px;" width="20.5" height="13" viewBox="0 0 20.5 13"><polygon points="5.6,0.5 19.5,0.5 19.5,6.6 14.4,12 0.5,12 0.5,5.8" fill="#e5f38a" stroke="#808080" stroke-width="0.9"/><polyline points="0.8,12.2 14.5,12.2 19.7,6.7" fill="none" stroke="#90a030" stroke-width="1"/><polyline points="1.4,11 1.4,6.1 5.9,1.4 18.6,1.4" fill="none" stroke="#fff" stroke-opacity="0.55" stroke-width="0.8"/><path d="M5.6 3 H11.4 L9.2 5.6 V9.6 H7.8 V5.6Z" fill="#3d78a0"/><rect x="11" y="8.2" width="1.2" height="1.4" fill="#3d78a0"/><rect x="12.8" y="6.6" width="1.2" height="3" fill="#3d78a0"/><rect x="14.6" y="5" width="1.2" height="4.6" fill="#3d78a0"/></svg>
<div style="left:481px;top:465.5px;width:368.5px;height:1px;background:#dce7ea;"></div>
<span class="t" style="left:488.90px;top:450px;font-size:12px;color:#1796a4;font-weight:bold;transform:scaleX(0.8840);-webkit-text-stroke:0.2px #1796a4;">10</span>
<span class="t" style="left:510.00px;top:451px;font-size:11px;color:#1c1c1c;transform:scaleX(0.9621);-webkit-text-stroke:0.15px #1c1c1c;">In Da Club</span>
<svg style="left:727.4px;top:450.9px;" width="11" height="11" viewBox="0 0 11 11"><rect x="0" y="0" width="10.6" height="10.6" fill="#e9e5dc"/><rect x="0" y="0" width="9.8" height="9.8" fill="#6e6e6e"/><rect x="0.9" y="0.9" width="9.7" height="9.7" fill="#f4f2ec"/><rect x="0.9" y="0.9" width="8.6" height="8.6" fill="#3c3c3c"/><rect x="1.9" y="1.9" width="7.8" height="7.8" fill="#fff"/></svg>
<svg style="left:747.0px;top:449.9px;" width="20.5" height="13" viewBox="0 0 20.5 13"><polygon points="5.6,0.5 19.5,0.5 19.5,6.6 14.4,12 0.5,12 0.5,5.8" fill="#f1cfd0" stroke="#808080" stroke-width="0.9"/><polyline points="0.8,12.2 14.5,12.2 19.7,6.7" fill="none" stroke="#b86068" stroke-width="1"/><polyline points="1.4,11 1.4,6.1 5.9,1.4 18.6,1.4" fill="none" stroke="#fff" stroke-opacity="0.55" stroke-width="0.8"/><rect x="7.6" y="3.2" width="1.5" height="6.2" fill="#3d78a0"/><path d="M10 3.6 L13.2 6.3 L10 9Z" fill="#3d78a0" opacity="0.75"/></svg>
<svg style="left:772.8px;top:449.9px;" width="20.5" height="13" viewBox="0 0 20.5 13"><polygon points="5.6,0.5 19.5,0.5 19.5,6.6 14.4,12 0.5,12 0.5,5.8" fill="#f5c6a2" stroke="#808080" stroke-width="0.9"/><polyline points="0.8,12.2 14.5,12.2 19.7,6.7" fill="none" stroke="#b87848" stroke-width="1"/><polyline points="1.4,11 1.4,6.1 5.9,1.4 18.6,1.4" fill="none" stroke="#fff" stroke-opacity="0.55" stroke-width="0.8"/><path d="M6 9.4 H13.6 V7.4 M6 9.4 V7.8" stroke="#3d78a0" stroke-width="1.2" fill="none"/><path d="M13.8 4.2 H8.6" stroke="#3d78a0" stroke-width="1.2" fill="none"/><path d="M9.6 2.4 L6.6 4.3 L9.6 6.2Z" fill="#3d78a0"/></svg>
<svg style="left:797.6px;top:449.9px;" width="20.5" height="13" viewBox="0 0 20.5 13"><polygon points="5.6,0.5 19.5,0.5 19.5,6.6 14.4,12 0.5,12 0.5,5.8" fill="#f8e4a0" stroke="#808080" stroke-width="0.9"/><polyline points="0.8,12.2 14.5,12.2 19.7,6.7" fill="none" stroke="#b89838" stroke-width="1"/><polyline points="1.4,11 1.4,6.1 5.9,1.4 18.6,1.4" fill="none" stroke="#fff" stroke-opacity="0.55" stroke-width="0.8"/><rect x="7.6" y="2.8" width="5" height="6.8" fill="none" stroke="#3d78a0" stroke-width="1.1"/><path d="M9.2 4.8 h1.8 M9.2 6.2 h1.8 M9.2 7.6 h1.8" stroke="#3d78a0" stroke-width="0.9"/></svg>
<svg style="left:822.7px;top:449.9px;" width="20.5" height="13" viewBox="0 0 20.5 13"><polygon points="5.6,0.5 19.5,0.5 19.5,6.6 14.4,12 0.5,12 0.5,5.8" fill="#e5f38a" stroke="#808080" stroke-width="0.9"/><polyline points="0.8,12.2 14.5,12.2 19.7,6.7" fill="none" stroke="#90a030" stroke-width="1"/><polyline points="1.4,11 1.4,6.1 5.9,1.4 18.6,1.4" fill="none" stroke="#fff" stroke-opacity="0.55" stroke-width="0.8"/><path d="M5.6 3 H11.4 L9.2 5.6 V9.6 H7.8 V5.6Z" fill="#3d78a0"/><rect x="11" y="8.2" width="1.2" height="1.4" fill="#3d78a0"/><rect x="12.8" y="6.6" width="1.2" height="3" fill="#3d78a0"/><rect x="14.6" y="5" width="1.2" height="4.6" fill="#3d78a0"/></svg>
<div style="left:481px;top:484.9px;width:368.5px;height:1px;background:#dce7ea;"></div>
<span class="t" style="left:488.90px;top:469px;font-size:12px;color:#1796a4;font-weight:bold;transform:scaleX(0.9302);-webkit-text-stroke:0.2px #1796a4;">11</span>
<span class="t" style="left:510.00px;top:470px;font-size:11px;color:#1c1c1c;transform:scaleX(0.9937);-webkit-text-stroke:0.15px #1c1c1c;">Fatboy Slim and Roland Clark</span>
<svg style="left:727.4px;top:470.3px;" width="11" height="11" viewBox="0 0 11 11"><rect x="0" y="0" width="10.6" height="10.6" fill="#e9e5dc"/><rect x="0" y="0" width="9.8" height="9.8" fill="#6e6e6e"/><rect x="0.9" y="0.9" width="9.7" height="9.7" fill="#f4f2ec"/><rect x="0.9" y="0.9" width="8.6" height="8.6" fill="#3c3c3c"/><rect x="1.9" y="1.9" width="7.8" height="7.8" fill="#fff"/></svg>
<svg style="left:747.0px;top:469.3px;" width="20.5" height="13" viewBox="0 0 20.5 13"><polygon points="5.6,0.5 19.5,0.5 19.5,6.6 14.4,12 0.5,12 0.5,5.8" fill="#f1cfd0" stroke="#808080" stroke-width="0.9"/><polyline points="0.8,12.2 14.5,12.2 19.7,6.7" fill="none" stroke="#b86068" stroke-width="1"/><polyline points="1.4,11 1.4,6.1 5.9,1.4 18.6,1.4" fill="none" stroke="#fff" stroke-opacity="0.55" stroke-width="0.8"/><rect x="7.6" y="3.2" width="1.5" height="6.2" fill="#3d78a0"/><path d="M10 3.6 L13.2 6.3 L10 9Z" fill="#3d78a0" opacity="0.75"/></svg>
<svg style="left:772.8px;top:469.3px;" width="20.5" height="13" viewBox="0 0 20.5 13"><polygon points="5.6,0.5 19.5,0.5 19.5,6.6 14.4,12 0.5,12 0.5,5.8" fill="#f5c6a2" stroke="#808080" stroke-width="0.9"/><polyline points="0.8,12.2 14.5,12.2 19.7,6.7" fill="none" stroke="#b87848" stroke-width="1"/><polyline points="1.4,11 1.4,6.1 5.9,1.4 18.6,1.4" fill="none" stroke="#fff" stroke-opacity="0.55" stroke-width="0.8"/><path d="M6 9.4 H13.6 V7.4 M6 9.4 V7.8" stroke="#3d78a0" stroke-width="1.2" fill="none"/><path d="M13.8 4.2 H8.6" stroke="#3d78a0" stroke-width="1.2" fill="none"/><path d="M9.6 2.4 L6.6 4.3 L9.6 6.2Z" fill="#3d78a0"/></svg>
<svg style="left:797.6px;top:469.3px;" width="20.5" height="13" viewBox="0 0 20.5 13"><polygon points="5.6,0.5 19.5,0.5 19.5,6.6 14.4,12 0.5,12 0.5,5.8" fill="#f8e4a0" stroke="#808080" stroke-width="0.9"/><polyline points="0.8,12.2 14.5,12.2 19.7,6.7" fill="none" stroke="#b89838" stroke-width="1"/><polyline points="1.4,11 1.4,6.1 5.9,1.4 18.6,1.4" fill="none" stroke="#fff" stroke-opacity="0.55" stroke-width="0.8"/><rect x="7.6" y="2.8" width="5" height="6.8" fill="none" stroke="#3d78a0" stroke-width="1.1"/><path d="M9.2 4.8 h1.8 M9.2 6.2 h1.8 M9.2 7.6 h1.8" stroke="#3d78a0" stroke-width="0.9"/></svg>
<svg style="left:822.7px;top:469.3px;" width="20.5" height="13" viewBox="0 0 20.5 13"><polygon points="5.6,0.5 19.5,0.5 19.5,6.6 14.4,12 0.5,12 0.5,5.8" fill="#e5f38a" stroke="#808080" stroke-width="0.9"/><polyline points="0.8,12.2 14.5,12.2 19.7,6.7" fill="none" stroke="#90a030" stroke-width="1"/><polyline points="1.4,11 1.4,6.1 5.9,1.4 18.6,1.4" fill="none" stroke="#fff" stroke-opacity="0.55" stroke-width="0.8"/><path d="M5.6 3 H11.4 L9.2 5.6 V9.6 H7.8 V5.6Z" fill="#3d78a0"/><rect x="11" y="8.2" width="1.2" height="1.4" fill="#3d78a0"/><rect x="12.8" y="6.6" width="1.2" height="3" fill="#3d78a0"/><rect x="14.6" y="5" width="1.2" height="4.6" fill="#3d78a0"/></svg>
<div style="left:481px;top:504.3px;width:368.5px;height:1px;background:#dce7ea;"></div>
<span class="t" style="left:488.90px;top:489px;font-size:12px;color:#1796a4;font-weight:bold;transform:scaleX(0.8840);-webkit-text-stroke:0.2px #1796a4;">12</span>
<span class="t" style="left:510.00px;top:490px;font-size:11px;color:#1c1c1c;transform:scaleX(0.9930);-webkit-text-stroke:0.15px #1c1c1c;">Jazz at the Movies Band</span>
<svg style="left:727.4px;top:489.7px;" width="11" height="11" viewBox="0 0 11 11"><rect x="0" y="0" width="10.6" height="10.6" fill="#e9e5dc"/><rect x="0" y="0" width="9.8" height="9.8" fill="#6e6e6e"/><rect x="0.9" y="0.9" width="9.7" height="9.7" fill="#f4f2ec"/><rect x="0.9" y="0.9" width="8.6" height="8.6" fill="#3c3c3c"/><rect x="1.9" y="1.9" width="7.8" height="7.8" fill="#fff"/></svg>
<svg style="left:747.0px;top:488.7px;" width="20.5" height="13" viewBox="0 0 20.5 13"><polygon points="5.6,0.5 19.5,0.5 19.5,6.6 14.4,12 0.5,12 0.5,5.8" fill="#f1cfd0" stroke="#808080" stroke-width="0.9"/><polyline points="0.8,12.2 14.5,12.2 19.7,6.7" fill="none" stroke="#b86068" stroke-width="1"/><polyline points="1.4,11 1.4,6.1 5.9,1.4 18.6,1.4" fill="none" stroke="#fff" stroke-opacity="0.55" stroke-width="0.8"/><rect x="7.6" y="3.2" width="1.5" height="6.2" fill="#3d78a0"/><path d="M10 3.6 L13.2 6.3 L10 9Z" fill="#3d78a0" opacity="0.75"/></svg>
<svg style="left:772.8px;top:488.7px;" width="20.5" height="13" viewBox="0 0 20.5 13"><polygon points="5.6,0.5 19.5,0.5 19.5,6.6 14.4,12 0.5,12 0.5,5.8" fill="#f5c6a2" stroke="#808080" stroke-width="0.9"/><polyline points="0.8,12.2 14.5,12.2 19.7,6.7" fill="none" stroke="#b87848" stroke-width="1"/><polyline points="1.4,11 1.4,6.1 5.9,1.4 18.6,1.4" fill="none" stroke="#fff" stroke-opacity="0.55" stroke-width="0.8"/><path d="M6 9.4 H13.6 V7.4 M6 9.4 V7.8" stroke="#3d78a0" stroke-width="1.2" fill="none"/><path d="M13.8 4.2 H8.6" stroke="#3d78a0" stroke-width="1.2" fill="none"/><path d="M9.6 2.4 L6.6 4.3 L9.6 6.2Z" fill="#3d78a0"/></svg>
<svg style="left:797.6px;top:488.7px;" width="20.5" height="13" viewBox="0 0 20.5 13"><polygon points="5.6,0.5 19.5,0.5 19.5,6.6 14.4,12 0.5,12 0.5,5.8" fill="#f8e4a0" stroke="#808080" stroke-width="0.9"/><polyline points="0.8,12.2 14.5,12.2 19.7,6.7" fill="none" stroke="#b89838" stroke-width="1"/><polyline points="1.4,11 1.4,6.1 5.9,1.4 18.6,1.4" fill="none" stroke="#fff" stroke-opacity="0.55" stroke-width="0.8"/><rect x="7.6" y="2.8" width="5" height="6.8" fill="none" stroke="#3d78a0" stroke-width="1.1"/><path d="M9.2 4.8 h1.8 M9.2 6.2 h1.8 M9.2 7.6 h1.8" stroke="#3d78a0" stroke-width="0.9"/></svg>
<svg style="left:822.7px;top:488.7px;" width="20.5" height="13" viewBox="0 0 20.5 13"><polygon points="5.6,0.5 19.5,0.5 19.5,6.6 14.4,12 0.5,12 0.5,5.8" fill="#e5f38a" stroke="#808080" stroke-width="0.9"/><polyline points="0.8,12.2 14.5,12.2 19.7,6.7" fill="none" stroke="#90a030" stroke-width="1"/><polyline points="1.4,11 1.4,6.1 5.9,1.4 18.6,1.4" fill="none" stroke="#fff" stroke-opacity="0.55" stroke-width="0.8"/><path d="M5.6 3 H11.4 L9.2 5.6 V9.6 H7.8 V5.6Z" fill="#3d78a0"/><rect x="11" y="8.2" width="1.2" height="1.4" fill="#3d78a0"/><rect x="12.8" y="6.6" width="1.2" height="3" fill="#3d78a0"/><rect x="14.6" y="5" width="1.2" height="4.6" fill="#3d78a0"/></svg>
<div style="left:481px;top:523.7px;width:368.5px;height:1px;background:#dce7ea;"></div>
<span class="t" style="left:488.90px;top:508px;font-size:12px;color:#1796a4;font-weight:bold;transform:scaleX(0.8840);-webkit-text-stroke:0.2px #1796a4;">13</span>
<span class="t" style="left:510.00px;top:509px;font-size:11px;color:#1c1c1c;transform:scaleX(1.0117);-webkit-text-stroke:0.15px #1c1c1c;">Roots Zack and Chuck D</span>
<svg style="left:727.4px;top:509.1px;" width="11" height="11" viewBox="0 0 11 11"><rect x="0" y="0" width="10.6" height="10.6" fill="#e9e5dc"/><rect x="0" y="0" width="9.8" height="9.8" fill="#6e6e6e"/><rect x="0.9" y="0.9" width="9.7" height="9.7" fill="#f4f2ec"/><rect x="0.9" y="0.9" width="8.6" height="8.6" fill="#3c3c3c"/><rect x="1.9" y="1.9" width="7.8" height="7.8" fill="#fff"/></svg>
<svg style="left:747.0px;top:508.1px;" width="20.5" height="13" viewBox="0 0 20.5 13"><polygon points="5.6,0.5 19.5,0.5 19.5,6.6 14.4,12 0.5,12 0.5,5.8" fill="#f1cfd0" stroke="#808080" stroke-width="0.9"/><polyline points="0.8,12.2 14.5,12.2 19.7,6.7" fill="none" stroke="#b86068" stroke-width="1"/><polyline points="1.4,11 1.4,6.1 5.9,1.4 18.6,1.4" fill="none" stroke="#fff" stroke-opacity="0.55" stroke-width="0.8"/><rect x="7.6" y="3.2" width="1.5" height="6.2" fill="#3d78a0"/><path d="M10 3.6 L13.2 6.3 L10 9Z" fill="#3d78a0" opacity="0.75"/></svg>
<svg style="left:772.8px;top:508.1px;" width="20.5" height="13" viewBox="0 0 20.5 13"><polygon points="5.6,0.5 19.5,0.5 19.5,6.6 14.4,12 0.5,12 0.5,5.8" fill="#f5c6a2" stroke="#808080" stroke-width="0.9"/><polyline points="0.8,12.2 14.5,12.2 19.7,6.7" fill="none" stroke="#b87848" stroke-width="1"/><polyline points="1.4,11 1.4,6.1 5.9,1.4 18.6,1.4" fill="none" stroke="#fff" stroke-opacity="0.55" stroke-width="0.8"/><path d="M6 9.4 H13.6 V7.4 M6 9.4 V7.8" stroke="#3d78a0" stroke-width="1.2" fill="none"/><path d="M13.8 4.2 H8.6" stroke="#3d78a0" stroke-width="1.2" fill="none"/><path d="M9.6 2.4 L6.6 4.3 L9.6 6.2Z" fill="#3d78a0"/></svg>
<svg style="left:797.6px;top:508.1px;" width="20.5" height="13" viewBox="0 0 20.5 13"><polygon points="5.6,0.5 19.5,0.5 19.5,6.6 14.4,12 0.5,12 0.5,5.8" fill="#f8e4a0" stroke="#808080" stroke-width="0.9"/><polyline points="0.8,12.2 14.5,12.2 19.7,6.7" fill="none" stroke="#b89838" stroke-width="1"/><polyline points="1.4,11 1.4,6.1 5.9,1.4 18.6,1.4" fill="none" stroke="#fff" stroke-opacity="0.55" stroke-width="0.8"/><rect x="7.6" y="2.8" width="5" height="6.8" fill="none" stroke="#3d78a0" stroke-width="1.1"/><path d="M9.2 4.8 h1.8 M9.2 6.2 h1.8 M9.2 7.6 h1.8" stroke="#3d78a0" stroke-width="0.9"/></svg>
<svg style="left:822.7px;top:508.1px;" width="20.5" height="13" viewBox="0 0 20.5 13"><polygon points="5.6,0.5 19.5,0.5 19.5,6.6 14.4,12 0.5,12 0.5,5.8" fill="#e5f38a" stroke="#808080" stroke-width="0.9"/><polyline points="0.8,12.2 14.5,12.2 19.7,6.7" fill="none" stroke="#90a030" stroke-width="1"/><polyline points="1.4,11 1.4,6.1 5.9,1.4 18.6,1.4" fill="none" stroke="#fff" stroke-opacity="0.55" stroke-width="0.8"/><path d="M5.6 3 H11.4 L9.2 5.6 V9.6 H7.8 V5.6Z" fill="#3d78a0"/><rect x="11" y="8.2" width="1.2" height="1.4" fill="#3d78a0"/><rect x="12.8" y="6.6" width="1.2" height="3" fill="#3d78a0"/><rect x="14.6" y="5" width="1.2" height="4.6" fill="#3d78a0"/></svg>
<div style="left:481px;top:543.1px;width:368.5px;height:1px;background:#dce7ea;"></div>
<span class="t" style="left:488.90px;top:528px;font-size:12px;color:#1796a4;font-weight:bold;transform:scaleX(0.8840);-webkit-text-stroke:0.2px #1796a4;">14</span>
<span class="t" style="left:510.00px;top:529px;font-size:11px;color:#1c1c1c;transform:scaleX(1.0119);-webkit-text-stroke:0.15px #1c1c1c;">Fine Young Cannibals</span>
<svg style="left:727.4px;top:528.5px;" width="11" height="11" viewBox="0 0 11 11"><rect x="0" y="0" width="10.6" height="10.6" fill="#e9e5dc"/><rect x="0" y="0" width="9.8" height="9.8" fill="#6e6e6e"/><rect x="0.9" y="0.9" width="9.7" height="9.7" fill="#f4f2ec"/><rect x="0.9" y="0.9" width="8.6" height="8.6" fill="#3c3c3c"/><rect x="1.9" y="1.9" width="7.8" height="7.8" fill="#fff"/></svg>
<svg style="left:747.0px;top:527.5px;" width="20.5" height="13" viewBox="0 0 20.5 13"><polygon points="5.6,0.5 19.5,0.5 19.5,6.6 14.4,12 0.5,12 0.5,5.8" fill="#f1cfd0" stroke="#808080" stroke-width="0.9"/><polyline points="0.8,12.2 14.5,12.2 19.7,6.7" fill="none" stroke="#b86068" stroke-width="1"/><polyline points="1.4,11 1.4,6.1 5.9,1.4 18.6,1.4" fill="none" stroke="#fff" stroke-opacity="0.55" stroke-width="0.8"/><rect x="7.6" y="3.2" width="1.5" height="6.2" fill="#3d78a0"/><path d="M10 3.6 L13.2 6.3 L10 9Z" fill="#3d78a0" opacity="0.75"/></svg>
<svg style="left:772.8px;top:527.5px;" width="20.5" height="13" viewBox="0 0 20.5 13"><polygon points="5.6,0.5 19.5,0.5 19.5,6.6 14.4,12 0.5,12 0.5,5.8" fill="#f5c6a2" stroke="#808080" stroke-width="0.9"/><polyline points="0.8,12.2 14.5,12.2 19.7,6.7" fill="none" stroke="#b87848" stroke-width="1"/><polyline points="1.4,11 1.4,6.1 5.9,1.4 18.6,1.4" fill="none" stroke="#fff" stroke-opacity="0.55" stroke-width="0.8"/><path d="M6 9.4 H13.6 V7.4 M6 9.4 V7.8" stroke="#3d78a0" stroke-width="1.2" fill="none"/><path d="M13.8 4.2 H8.6" stroke="#3d78a0" stroke-width="1.2" fill="none"/><path d="M9.6 2.4 L6.6 4.3 L9.6 6.2Z" fill="#3d78a0"/></svg>
<svg style="left:797.6px;top:527.5px;" width="20.5" height="13" viewBox="0 0 20.5 13"><polygon points="5.6,0.5 19.5,0.5 19.5,6.6 14.4,12 0.5,12 0.5,5.8" fill="#f8e4a0" stroke="#808080" stroke-width="0.9"/><polyline points="0.8,12.2 14.5,12.2 19.7,6.7" fill="none" stroke="#b89838" stroke-width="1"/><polyline points="1.4,11 1.4,6.1 5.9,1.4 18.6,1.4" fill="none" stroke="#fff" stroke-opacity="0.55" stroke-width="0.8"/><rect x="7.6" y="2.8" width="5" height="6.8" fill="none" stroke="#3d78a0" stroke-width="1.1"/><path d="M9.2 4.8 h1.8 M9.2 6.2 h1.8 M9.2 7.6 h1.8" stroke="#3d78a0" stroke-width="0.9"/></svg>
<svg style="left:822.7px;top:527.5px;" width="20.5" height="13" viewBox="0 0 20.5 13"><polygon points="5.6,0.5 19.5,0.5 19.5,6.6 14.4,12 0.5,12 0.5,5.8" fill="#e5f38a" stroke="#808080" stroke-width="0.9"/><polyline points="0.8,12.2 14.5,12.2 19.7,6.7" fill="none" stroke="#90a030" stroke-width="1"/><polyline points="1.4,11 1.4,6.1 5.9,1.4 18.6,1.4" fill="none" stroke="#fff" stroke-opacity="0.55" stroke-width="0.8"/><path d="M5.6 3 H11.4 L9.2 5.6 V9.6 H7.8 V5.6Z" fill="#3d78a0"/><rect x="11" y="8.2" width="1.2" height="1.4" fill="#3d78a0"/><rect x="12.8" y="6.6" width="1.2" height="3" fill="#3d78a0"/><rect x="14.6" y="5" width="1.2" height="4.6" fill="#3d78a0"/></svg>
<div style="left:481px;top:562.5px;width:368.5px;height:1px;background:#dce7ea;"></div>
<span class="t" style="left:488.90px;top:547px;font-size:12px;color:#1796a4;font-weight:bold;transform:scaleX(0.8840);-webkit-text-stroke:0.2px #1796a4;">15</span>
<span class="t" style="left:510.00px;top:548px;font-size:11px;color:#1c1c1c;transform:scaleX(0.9931);-webkit-text-stroke:0.15px #1c1c1c;">Jody Watley with Eric B, and Rakim</span>
<svg style="left:727.4px;top:547.9px;" width="11" height="11" viewBox="0 0 11 11"><rect x="0" y="0" width="10.6" height="10.6" fill="#e9e5dc"/><rect x="0" y="0" width="9.8" height="9.8" fill="#6e6e6e"/><rect x="0.9" y="0.9" width="9.7" height="9.7" fill="#f4f2ec"/><rect x="0.9" y="0.9" width="8.6" height="8.6" fill="#3c3c3c"/><rect x="1.9" y="1.9" width="7.8" height="7.8" fill="#fff"/></svg>
<svg style="left:747.0px;top:546.9px;" width="20.5" height="13" viewBox="0 0 20.5 13"><polygon points="5.6,0.5 19.5,0.5 19.5,6.6 14.4,12 0.5,12 0.5,5.8" fill="#f1cfd0" stroke="#808080" stroke-width="0.9"/><polyline points="0.8,12.2 14.5,12.2 19.7,6.7" fill="none" stroke="#b86068" stroke-width="1"/><polyline points="1.4,11 1.4,6.1 5.9,1.4 18.6,1.4" fill="none" stroke="#fff" stroke-opacity="0.55" stroke-width="0.8"/><rect x="7.6" y="3.2" width="1.5" height="6.2" fill="#3d78a0"/><path d="M10 3.6 L13.2 6.3 L10 9Z" fill="#3d78a0" opacity="0.75"/></svg>
<svg style="left:772.8px;top:546.9px;" width="20.5" height="13" viewBox="0 0 20.5 13"><polygon points="5.6,0.5 19.5,0.5 19.5,6.6 14.4,12 0.5,12 0.5,5.8" fill="#f5c6a2" stroke="#808080" stroke-width="0.9"/><polyline points="0.8,12.2 14.5,12.2 19.7,6.7" fill="none" stroke="#b87848" stroke-width="1"/><polyline points="1.4,11 1.4,6.1 5.9,1.4 18.6,1.4" fill="none" stroke="#fff" stroke-opacity="0.55" stroke-width="0.8"/><path d="M6 9.4 H13.6 V7.4 M6 9.4 V7.8" stroke="#3d78a0" stroke-width="1.2" fill="none"/><path d="M13.8 4.2 H8.6" stroke="#3d78a0" stroke-width="1.2" fill="none"/><path d="M9.6 2.4 L6.6 4.3 L9.6 6.2Z" fill="#3d78a0"/></svg>
<svg style="left:797.6px;top:546.9px;" width="20.5" height="13" viewBox="0 0 20.5 13"><polygon points="5.6,0.5 19.5,0.5 19.5,6.6 14.4,12 0.5,12 0.5,5.8" fill="#f8e4a0" stroke="#808080" stroke-width="0.9"/><polyline points="0.8,12.2 14.5,12.2 19.7,6.7" fill="none" stroke="#b89838" stroke-width="1"/><polyline points="1.4,11 1.4,6.1 5.9,1.4 18.6,1.4" fill="none" stroke="#fff" stroke-opacity="0.55" stroke-width="0.8"/><rect x="7.6" y="2.8" width="5" height="6.8" fill="none" stroke="#3d78a0" stroke-width="1.1"/><path d="M9.2 4.8 h1.8 M9.2 6.2 h1.8 M9.2 7.6 h1.8" stroke="#3d78a0" stroke-width="0.9"/></svg>
<svg style="left:822.7px;top:546.9px;" width="20.5" height="13" viewBox="0 0 20.5 13"><polygon points="5.6,0.5 19.5,0.5 19.5,6.6 14.4,12 0.5,12 0.5,5.8" fill="#e5f38a" stroke="#808080" stroke-width="0.9"/><polyline points="0.8,12.2 14.5,12.2 19.7,6.7" fill="none" stroke="#90a030" stroke-width="1"/><polyline points="1.4,11 1.4,6.1 5.9,1.4 18.6,1.4" fill="none" stroke="#fff" stroke-opacity="0.55" stroke-width="0.8"/><path d="M5.6 3 H11.4 L9.2 5.6 V9.6 H7.8 V5.6Z" fill="#3d78a0"/><rect x="11" y="8.2" width="1.2" height="1.4" fill="#3d78a0"/><rect x="12.8" y="6.6" width="1.2" height="3" fill="#3d78a0"/><rect x="14.6" y="5" width="1.2" height="4.6" fill="#3d78a0"/></svg>
<div style="left:481px;top:581.9px;width:368.5px;height:1px;background:#dce7ea;"></div>
<span class="t" style="left:488.90px;top:566px;font-size:12px;color:#1796a4;font-weight:bold;transform:scaleX(0.8840);-webkit-text-stroke:0.2px #1796a4;">16</span>
<span class="t" style="left:510.00px;top:567px;font-size:11px;color:#1c1c1c;transform:scaleX(1.0213);-webkit-text-stroke:0.15px #1c1c1c;">Julio Iglesias and Diana ross</span>
<svg style="left:727.4px;top:567.3px;" width="11" height="11" viewBox="0 0 11 11"><rect x="0" y="0" width="10.6" height="10.6" fill="#e9e5dc"/><rect x="0" y="0" width="9.8" height="9.8" fill="#6e6e6e"/><rect x="0.9" y="0.9" width="9.7" height="9.7" fill="#f4f2ec"/><rect x="0.9" y="0.9" width="8.6" height="8.6" fill="#3c3c3c"/><rect x="1.9" y="1.9" width="7.8" height="7.8" fill="#fff"/></svg>
<svg style="left:747.0px;top:566.3px;" width="20.5" height="13" viewBox="0 0 20.5 13"><polygon points="5.6,0.5 19.5,0.5 19.5,6.6 14.4,12 0.5,12 0.5,5.8" fill="#f1cfd0" stroke="#808080" stroke-width="0.9"/><polyline points="0.8,12.2 14.5,12.2 19.7,6.7" fill="none" stroke="#b86068" stroke-width="1"/><polyline points="1.4,11 1.4,6.1 5.9,1.4 18.6,1.4" fill="none" stroke="#fff" stroke-opacity="0.55" stroke-width="0.8"/><rect x="7.6" y="3.2" width="1.5" height="6.2" fill="#3d78a0"/><path d="M10 3.6 L13.2 6.3 L10 9Z" fill="#3d78a0" opacity="0.75"/></svg>
<svg style="left:772.8px;top:566.3px;" width="20.5" height="13" viewBox="0 0 20.5 13"><polygon points="5.6,0.5 19.5,0.5 19.5,6.6 14.4,12 0.5,12 0.5,5.8" fill="#f5c6a2" stroke="#808080" stroke-width="0.9"/><polyline points="0.8,12.2 14.5,12.2 19.7,6.7" fill="none" stroke="#b87848" stroke-width="1"/><polyline points="1.4,11 1.4,6.1 5.9,1.4 18.6,1.4" fill="none" stroke="#fff" stroke-opacity="0.55" stroke-width="0.8"/><path d="M6 9.4 H13.6 V7.4 M6 9.4 V7.8" stroke="#3d78a0" stroke-width="1.2" fill="none"/><path d="M13.8 4.2 H8.6" stroke="#3d78a0" stroke-width="1.2" fill="none"/><path d="M9.6 2.4 L6.6 4.3 L9.6 6.2Z" fill="#3d78a0"/></svg>
<svg style="left:797.6px;top:566.3px;" width="20.5" height="13" viewBox="0 0 20.5 13"><polygon points="5.6,0.5 19.5,0.5 19.5,6.6 14.4,12 0.5,12 0.5,5.8" fill="#f8e4a0" stroke="#808080" stroke-width="0.9"/><polyline points="0.8,12.2 14.5,12.2 19.7,6.7" fill="none" stroke="#b89838" stroke-width="1"/><polyline points="1.4,11 1.4,6.1 5.9,1.4 18.6,1.4" fill="none" stroke="#fff" stroke-opacity="0.55" stroke-width="0.8"/><rect x="7.6" y="2.8" width="5" height="6.8" fill="none" stroke="#3d78a0" stroke-width="1.1"/><path d="M9.2 4.8 h1.8 M9.2 6.2 h1.8 M9.2 7.6 h1.8" stroke="#3d78a0" stroke-width="0.9"/></svg>
<svg style="left:822.7px;top:566.3px;" width="20.5" height="13" viewBox="0 0 20.5 13"><polygon points="5.6,0.5 19.5,0.5 19.5,6.6 14.4,12 0.5,12 0.5,5.8" fill="#e5f38a" stroke="#808080" stroke-width="0.9"/><polyline points="0.8,12.2 14.5,12.2 19.7,6.7" fill="none" stroke="#90a030" stroke-width="1"/><polyline points="1.4,11 1.4,6.1 5.9,1.4 18.6,1.4" fill="none" stroke="#fff" stroke-opacity="0.55" stroke-width="0.8"/><path d="M5.6 3 H11.4 L9.2 5.6 V9.6 H7.8 V5.6Z" fill="#3d78a0"/><rect x="11" y="8.2" width="1.2" height="1.4" fill="#3d78a0"/><rect x="12.8" y="6.6" width="1.2" height="3" fill="#3d78a0"/><rect x="14.6" y="5" width="1.2" height="4.6" fill="#3d78a0"/></svg>
<svg style="left:485px;top:590.9px;" width="63.6" height="18.8" viewBox="0 0 63.6 18.8"><polygon points="4,0.5 62.1,0.5 62.1,12.8 57.6,17.3 0.5,17.3 0.5,4.5" fill="#e9e9e9" stroke="#707070" stroke-width="1"/><polyline points="0.6,17.6 57.7,17.6 62.4,12.9" fill="none" stroke="#555" stroke-width="0.7"/><rect x="7.4" y="5.4" width="1.2" height="6" fill="#3a7aa8"/><path d="M9.6 5.8 L12.4 8.4 L9.6 11Z" fill="#6a9ac0"/></svg>
<svg style="left:499.3px;top:589.6px;" width="44" height="20" viewBox="0 0 44 20"><text x="3" y="14" font-size="9.5" font-weight="bold" fill="#111" font-family="'Liberation Sans','Noto Sans CJK KR',sans-serif">전체듣기</text></svg>
<svg style="left:555.4px;top:590.9px;" width="63.6" height="18.8" viewBox="0 0 63.6 18.8"><polygon points="4,0.5 62.1,0.5 62.1,12.8 57.6,17.3 0.5,17.3 0.5,4.5" fill="#e9e9e9" stroke="#707070" stroke-width="1"/><polyline points="0.6,17.6 57.7,17.6 62.4,12.9" fill="none" stroke="#555" stroke-width="0.7"/><path d="M8 8.2 Q6.4 6 8.6 4.6 Q11.4 4 11.6 6.6 Q11 8.6 9.4 9.6 M9.4 9.6 l-0.2 2.4" fill="none" stroke="#3a8ac0" stroke-width="1.1"/></svg>
<svg style="left:567.7px;top:589.6px;" width="45" height="20" viewBox="0 0 45 20"><text x="3.3" y="14" font-size="9.5" font-weight="bold" fill="#111" font-family="'Liberation Sans','Noto Sans CJK KR',sans-serif">랜덤듣기</text></svg>
<svg style="left:719.5px;top:590.9px;" width="59" height="18.8" viewBox="0 0 59 18.8"><polygon points="4,0.5 57.5,0.5 57.5,12.8 53,17.3 0.5,17.3 0.5,4.5" fill="#e9e9e9" stroke="#707070" stroke-width="1"/><polyline points="0.6,17.6 53.1,17.6 57.8,12.9" fill="none" stroke="#555" stroke-width="0.7"/></svg>
<svg style="left:724.7px;top:589.6px;" width="45" height="20" viewBox="0 0 45 20"><text x="3" y="14" font-size="9.5" font-weight="bold" fill="#111" font-family="'Liberation Sans','Noto Sans CJK KR',sans-serif">전체선택</text></svg>
<svg style="left:788.2px;top:590.9px;" width="58.6" height="18.8" viewBox="0 0 58.6 18.8"><polygon points="4,0.5 57.1,0.5 57.1,12.8 52.6,17.3 0.5,17.3 0.5,4.5" fill="#e9e9e9" stroke="#707070" stroke-width="1"/><polyline points="0.6,17.6 52.7,17.6 57.4,12.9" fill="none" stroke="#555" stroke-width="0.7"/></svg>
<svg style="left:795.3px;top:589.6px;" width="44" height="20" viewBox="0 0 44 20"><text x="3" y="14" font-size="9.5" font-weight="bold" fill="#111" font-family="'Liberation Sans','Noto Sans CJK KR',sans-serif">선택듣기</text></svg>
<div style="left:346px;top:643.6px;width:517px;height:12.8px;background:#41708d;"></div>
<svg style="left:336.5px;top:643px;" width="10" height="14" viewBox="0 0 10 14"><polygon points="0,1 9.5,0.6 9.5,10.5 0,13.4" fill="#0a3638"/><polygon points="0,13.4 9.5,10.5 9.5,13.4" fill="#050808"/></svg>
<div style="left:336.5px;top:656.1px;width:526.5px;height:2.6px;background:#0a0f12;"></div>
<div style="left:336.5px;top:658.5px;width:526.5px;height:178.5px;background:#ebe9e4;"></div>
<svg style="left:345px;top:664.6px;" width="513" height="21" viewBox="0 0 513 21"><path d="M2 0 H512 V17.6 L509 20.6 H0 V2 Q0 0 2 0Z" fill="#04a0a8"/></svg>
<svg style="left:348.8px;top:671.4px;" width="9" height="8" viewBox="0 0 9 8"><path d="M0.6 4 H7.2 M4.4 1.2 L7.4 4 L4.4 6.8" fill="none" stroke="#fff" stroke-width="1.25"/></svg>
<span class="t" style="left:360.60px;top:672px;font-size:10px;color:#fff;transform:scaleX(1.0060);-webkit-text-stroke:0.25px #fff;">ALBUM LIST</span>
<svg style="left:346px;top:691px;" width="86" height="86" viewBox="0 0 86 86"><defs><linearGradient id="ag" x1="0" y1="0" x2="1" y2="0"><stop offset="0" stop-color="#587ae8"/><stop offset="0.4" stop-color="#6478e6"/><stop offset="0.47" stop-color="#6a4ea8"/><stop offset="0.56" stop-color="#8f98e6"/><stop offset="0.75" stop-color="#a6aeea"/><stop offset="0.8" stop-color="#4a5aa8"/><stop offset="1" stop-color="#3a4a98"/></linearGradient>
<filter id="ab"><feGaussianBlur stdDeviation="1.3"/></filter></defs><rect x="0.5" y="0.5" width="85" height="85" fill="#5f9a9a" stroke="#246c70" stroke-width="1"/>
<polygon points="1,80 5,80 85,80 85,85 1,85" fill="#8db6b2"/>
<polygon points="1,1 5.3,1 5.3,80 1,85" fill="#5a9090"/>
<svg x="5.3" y="1" width="79.7" height="79" viewBox="0 0 80 79" preserveAspectRatio="none">
<rect width="80" height="79" fill="url(#ag)"/>
<g filter="url(#ab)">
<polygon points="17,0 30,0 36,18 30,30 22,22" fill="#57488c" opacity="0.8"/>
<polygon points="22,12 30,10 33,22 26,25" fill="#c0608a" opacity="0.65"/>
<polygon points="36,0 44,0 43,79 34,79" fill="#6848a4" opacity="0.85"/>
<polygon points="43,0 58,0 60,79 43,79" fill="#aab0ee" opacity="0.9"/>
<polygon points="40,0 50,0 48,18 42,16" fill="#dcdff8" opacity="0.9"/>
<polygon points="50,10 56,8 58,79 52,79" fill="#8e96e2" opacity="0.8"/>
<polygon points="60,16 80,22 80,79 61,79" fill="#3c4c96" opacity="0.9"/>
<polygon points="60,0 80,0 80,14 62,18" fill="#8aa890" opacity="0.8"/>
<ellipse cx="66" cy="6" rx="5" ry="4.5" fill="#f6f6dc"/>
<ellipse cx="76" cy="9" rx="4" ry="5" fill="#f2f2e0"/>
<polygon points="60,22 80,28 80,38 61,32" fill="#c0c8f0" opacity="0.6"/>
<polygon points="64,44 80,50 80,58 66,54" fill="#6a88d0" opacity="0.7"/>
<polygon points="62,62 74,66 74,74 63,72" fill="#5a78c8" opacity="0.6"/>
<circle cx="29" cy="70" r="2.4" fill="#f050c0"/>
</g>
</svg></svg>
<span class="t" style="left:363.60px;top:712px;font-size:20px;color:#fff;transform:scaleX(0.9913);opacity:0.6;text-shadow:1px 1px 1px rgba(60,60,110,0.55);">image</span>
<span class="t" style="left:358.40px;top:733px;font-size:20px;color:#fff;transform:scaleX(1.0082);opacity:0.6;text-shadow:1px 1px 1px rgba(60,60,110,0.55);">sample</span>
<svg style="left:346px;top:780px;" width="18" height="17" viewBox="0 0 18 17"><rect x="0.5" y="0.5" width="17" height="16" fill="#eef0ec" stroke="#2a7074" stroke-width="1"/><rect x="2.4" y="2.4" width="13.2" height="12.2" fill="#357a7e"/><rect x="3.60" y="6.00" width="1.0" height="1.0" fill="#fff"/><rect x="4.60" y="6.00" width="1.0" height="1.0" fill="#fff"/><rect x="5.60" y="6.00" width="1.0" height="1.0" fill="#fff"/><rect x="6.60" y="6.00" width="1.0" height="1.0" fill="#fff"/><rect x="7.60" y="6.00" width="1.0" height="1.0" fill="#fff"/><rect x="3.60" y="7.00" width="1.0" height="1.0" fill="#fff"/><rect x="7.60" y="7.00" width="1.0" height="1.0" fill="#fff"/><rect x="3.60" y="8.00" width="1.0" height="1.0" fill="#fff"/><rect x="7.60" y="8.00" width="1.0" height="1.0" fill="#fff"/><rect x="3.60" y="9.00" width="1.0" height="1.0" fill="#fff"/><rect x="7.60" y="9.00" width="1.0" height="1.0" fill="#fff"/><rect x="3.60" y="10.00" width="1.0" height="1.0" fill="#fff"/><rect x="4.60" y="10.00" width="1.0" height="1.0" fill="#fff"/><rect x="5.60" y="10.00" width="1.0" height="1.0" fill="#fff"/><rect x="6.60" y="10.00" width="1.0" height="1.0" fill="#fff"/><rect x="7.60" y="10.00" width="1.0" height="1.0" fill="#fff"/><rect x="10.60" y="6.00" width="1.0" height="1.0" fill="#fff"/><rect x="11.60" y="6.00" width="1.0" height="1.0" fill="#fff"/><rect x="11.60" y="7.00" width="1.0" height="1.0" fill="#fff"/><rect x="11.60" y="8.00" width="1.0" height="1.0" fill="#fff"/><rect x="11.60" y="9.00" width="1.0" height="1.0" fill="#fff"/><rect x="11.60" y="10.00" width="1.0" height="1.0" fill="#fff"/></svg>
<span class="t" style="left:373.00px;top:784px;font-size:10px;color:#16888c;transform:scaleX(0.8991);">FIST LOVE</span>
<svg style="left:452.6px;top:691px;" width="86" height="86" viewBox="0 0 86 86"><rect x="0.5" y="0.5" width="85" height="85" fill="#5f9a9a" stroke="#246c70" stroke-width="1"/>
<polygon points="1,80 5,80 85,80 85,85 1,85" fill="#8db6b2"/>
<polygon points="1,1 5.3,1 5.3,80 1,85" fill="#5a9090"/>
<svg x="5.3" y="1" width="79.7" height="79" viewBox="0 0 80 79" preserveAspectRatio="none">
<rect width="80" height="79" fill="url(#ag)"/>
<g filter="url(#ab)">
<polygon points="17,0 30,0 36,18 30,30 22,22" fill="#57488c" opacity="0.8"/>
<polygon points="22,12 30,10 33,22 26,25" fill="#c0608a" opacity="0.65"/>
<polygon points="36,0 44,0 43,79 34,79" fill="#6848a4" opacity="0.85"/>
<polygon points="43,0 58,0 60,79 43,79" fill="#aab0ee" opacity="0.9"/>
<polygon points="40,0 50,0 48,18 42,16" fill="#dcdff8" opacity="0.9"/>
<polygon points="50,10 56,8 58,79 52,79" fill="#8e96e2" opacity="0.8"/>
<polygon points="60,16 80,22 80,79 61,79" fill="#3c4c96" opacity="0.9"/>
<polygon points="60,0 80,0 80,14 62,18" fill="#8aa890" opacity="0.8"/>
<ellipse cx="66" cy="6" rx="5" ry="4.5" fill="#f6f6dc"/>
<ellipse cx="76" cy="9" rx="4" ry="5" fill="#f2f2e0"/>
<polygon points="60,22 80,28 80,38 61,32" fill="#c0c8f0" opacity="0.6"/>
<polygon points="64,44 80,50 80,58 66,54" fill="#6a88d0" opacity="0.7"/>
<polygon points="62,62 74,66 74,74 63,72" fill="#5a78c8" opacity="0.6"/>
<circle cx="29" cy="70" r="2.4" fill="#f050c0"/>
</g>
</svg></svg>
<span class="t" style="left:470.20px;top:712px;font-size:20px;color:#fff;transform:scaleX(0.9913);opacity:0.6;text-shadow:1px 1px 1px rgba(60,60,110,0.55);">image</span>
<span class="t" style="left:465.00px;top:733px;font-size:20px;color:#fff;transform:scaleX(1.0082);opacity:0.6;text-shadow:1px 1px 1px rgba(60,60,110,0.55);">sample</span>
<svg style="left:452.6px;top:780px;" width="18" height="17" viewBox="0 0 18 17"><rect x="0.5" y="0.5" width="17" height="16" fill="#eef0ec" stroke="#2a7074" stroke-width="1"/><rect x="2.4" y="2.4" width="13.2" height="12.2" fill="#357a7e"/><rect x="3.60" y="6.00" width="1.0" height="1.0" fill="#fff"/><rect x="4.60" y="6.00" width="1.0" height="1.0" fill="#fff"/><rect x="5.60" y="6.00" width="1.0" height="1.0" fill="#fff"/><rect x="6.60" y="6.00" width="1.0" height="1.0" fill="#fff"/><rect x="7.60" y="6.00" width="1.0" height="1.0" fill="#fff"/><rect x="3.60" y="7.00" width="1.0" height="1.0" fill="#fff"/><rect x="7.60" y="7.00" width="1.0" height="1.0" fill="#fff"/><rect x="3.60" y="8.00" width="1.0" height="1.0" fill="#fff"/><rect x="7.60" y="8.00" width="1.0" height="1.0" fill="#fff"/><rect x="3.60" y="9.00" width="1.0" height="1.0" fill="#fff"/><rect x="7.60" y="9.00" width="1.0" height="1.0" fill="#fff"/><rect x="3.60" y="10.00" width="1.0" height="1.0" fill="#fff"/><rect x="4.60" y="10.00" width="1.0" height="1.0" fill="#fff"/><rect x="5.60" y="10.00" width="1.0" height="1.0" fill="#fff"/><rect x="6.60" y="10.00" width="1.0" height="1.0" fill="#fff"/><rect x="7.60" y="10.00" width="1.0" height="1.0" fill="#fff"/><rect x="9.60" y="6.00" width="1.0" height="1.0" fill="#fff"/><rect x="10.60" y="6.00" width="1.0" height="1.0" fill="#fff"/><rect x="11.60" y="6.00" width="1.0" height="1.0" fill="#fff"/><rect x="12.60" y="6.00" width="1.0" height="1.0" fill="#fff"/><rect x="13.60" y="6.00" width="1.0" height="1.0" fill="#fff"/><rect x="13.60" y="7.00" width="1.0" height="1.0" fill="#fff"/><rect x="9.60" y="8.00" width="1.0" height="1.0" fill="#fff"/><rect x="10.60" y="8.00" width="1.0" height="1.0" fill="#fff"/><rect x="11.60" y="8.00" width="1.0" height="1.0" fill="#fff"/><rect x="12.60" y="8.00" width="1.0" height="1.0" fill="#fff"/><rect x="13.60" y="8.00" width="1.0" height="1.0" fill="#fff"/><rect x="9.60" y="9.00" width="1.0" height="1.0" fill="#fff"/><rect x="9.60" y="10.00" width="1.0" height="1.0" fill="#fff"/><rect x="10.60" y="10.00" width="1.0" height="1.0" fill="#fff"/><rect x="11.60" y="10.00" width="1.0" height="1.0" fill="#fff"/><rect x="12.60" y="10.00" width="1.0" height="1.0" fill="#fff"/><rect x="13.60" y="10.00" width="1.0" height="1.0" fill="#fff"/></svg>
<span class="t" style="left:479.80px;top:784px;font-size:10px;color:#16888c;transform:scaleX(0.9594);">SAY YES</span>
<svg style="left:558.8px;top:691px;" width="86" height="86" viewBox="0 0 86 86"><rect x="0.5" y="0.5" width="85" height="85" fill="#5f9a9a" stroke="#246c70" stroke-width="1"/>
<polygon points="1,80 5,80 85,80 85,85 1,85" fill="#8db6b2"/>
<polygon points="1,1 5.3,1 5.3,80 1,85" fill="#5a9090"/>
<svg x="5.3" y="1" width="79.7" height="79" viewBox="0 0 80 79" preserveAspectRatio="none">
<rect width="80" height="79" fill="url(#ag)"/>
<g filter="url(#ab)">
<polygon points="17,0 30,0 36,18 30,30 22,22" fill="#57488c" opacity="0.8"/>
<polygon points="22,12 30,10 33,22 26,25" fill="#c0608a" opacity="0.65"/>
<polygon points="36,0 44,0 43,79 34,79" fill="#6848a4" opacity="0.85"/>
<polygon points="43,0 58,0 60,79 43,79" fill="#aab0ee" opacity="0.9"/>
<polygon points="40,0 50,0 48,18 42,16" fill="#dcdff8" opacity="0.9"/>
<polygon points="50,10 56,8 58,79 52,79" fill="#8e96e2" opacity="0.8"/>
<polygon points="60,16 80,22 80,79 61,79" fill="#3c4c96" opacity="0.9"/>
<polygon points="60,0 80,0 80,14 62,18" fill="#8aa890" opacity="0.8"/>
<ellipse cx="66" cy="6" rx="5" ry="4.5" fill="#f6f6dc"/>
<ellipse cx="76" cy="9" rx="4" ry="5" fill="#f2f2e0"/>
<polygon points="60,22 80,28 80,38 61,32" fill="#c0c8f0" opacity="0.6"/>
<polygon points="64,44 80,50 80,58 66,54" fill="#6a88d0" opacity="0.7"/>
<polygon points="62,62 74,66 74,74 63,72" fill="#5a78c8" opacity="0.6"/>
<circle cx="29" cy="70" r="2.4" fill="#f050c0"/>
</g>
</svg></svg>
<span class="t" style="left:576.40px;top:712px;font-size:20px;color:#fff;transform:scaleX(0.9913);opacity:0.6;text-shadow:1px 1px 1px rgba(60,60,110,0.55);">image</span>
<span class="t" style="left:571.20px;top:733px;font-size:20px;color:#fff;transform:scaleX(1.0082);opacity:0.6;text-shadow:1px 1px 1px rgba(60,60,110,0.55);">sample</span>
<svg style="left:558.8px;top:780px;" width="18" height="17" viewBox="0 0 18 17"><rect x="0.5" y="0.5" width="17" height="16" fill="#eef0ec" stroke="#2a7074" stroke-width="1"/><rect x="2.4" y="2.4" width="13.2" height="12.2" fill="#357a7e"/><rect x="3.60" y="6.00" width="1.0" height="1.0" fill="#fff"/><rect x="4.60" y="6.00" width="1.0" height="1.0" fill="#fff"/><rect x="5.60" y="6.00" width="1.0" height="1.0" fill="#fff"/><rect x="6.60" y="6.00" width="1.0" height="1.0" fill="#fff"/><rect x="7.60" y="6.00" width="1.0" height="1.0" fill="#fff"/><rect x="3.60" y="7.00" width="1.0" height="1.0" fill="#fff"/><rect x="7.60" y="7.00" width="1.0" height="1.0" fill="#fff"/><rect x="3.60" y="8.00" width="1.0" height="1.0" fill="#fff"/><rect x="7.60" y="8.00" width="1.0" height="1.0" fill="#fff"/><rect x="3.60" y="9.00" width="1.0" height="1.0" fill="#fff"/><rect x="7.60" y="9.00" width="1.0" height="1.0" fill="#fff"/><rect x="3.60" y="10.00" width="1.0" height="1.0" fill="#fff"/><rect x="4.60" y="10.00" width="1.0" height="1.0" fill="#fff"/><rect x="5.60" y="10.00" width="1.0" height="1.0" fill="#fff"/><rect x="6.60" y="10.00" width="1.0" height="1.0" fill="#fff"/><rect x="7.60" y="10.00" width="1.0" height="1.0" fill="#fff"/><rect x="9.60" y="6.00" width="1.0" height="1.0" fill="#fff"/><rect x="10.60" y="6.00" width="1.0" height="1.0" fill="#fff"/><rect x="11.60" y="6.00" width="1.0" height="1.0" fill="#fff"/><rect x="12.60" y="6.00" width="1.0" height="1.0" fill="#fff"/><rect x="13.60" y="6.00" width="1.0" height="1.0" fill="#fff"/><rect x="13.60" y="7.00" width="1.0" height="1.0" fill="#fff"/><rect x="10.60" y="8.00" width="1.0" height="1.0" fill="#fff"/><rect x="11.60" y="8.00" width="1.0" height="1.0" fill="#fff"/><rect x="12.60" y="8.00" width="1.0" height="1.0" fill="#fff"/><rect x="13.60" y="8.00" width="1.0" height="1.0" fill="#fff"/><rect x="13.60" y="9.00" width="1.0" height="1.0" fill="#fff"/><rect x="9.60" y="10.00" width="1.0" height="1.0" fill="#fff"/><rect x="10.60" y="10.00" width="1.0" height="1.0" fill="#fff"/><rect x="11.60" y="10.00" width="1.0" height="1.0" fill="#fff"/><rect x="12.60" y="10.00" width="1.0" height="1.0" fill="#fff"/><rect x="13.60" y="10.00" width="1.0" height="1.0" fill="#fff"/></svg>
<span class="t" style="left:586.80px;top:784px;font-size:10px;color:#16888c;transform:scaleX(0.9594);">SAY YES</span>
<svg style="left:665px;top:691px;" width="86" height="86" viewBox="0 0 86 86"><rect x="0.5" y="0.5" width="85" height="85" fill="#5f9a9a" stroke="#246c70" stroke-width="1"/>
<polygon points="1,80 5,80 85,80 85,85 1,85" fill="#8db6b2"/>
<polygon points="1,1 5.3,1 5.3,80 1,85" fill="#5a9090"/>
<svg x="5.3" y="1" width="79.7" height="79" viewBox="0 0 80 79" preserveAspectRatio="none">
<rect width="80" height="79" fill="url(#ag)"/>
<g filter="url(#ab)">
<polygon points="17,0 30,0 36,18 30,30 22,22" fill="#57488c" opacity="0.8"/>
<polygon points="22,12 30,10 33,22 26,25" fill="#c0608a" opacity="0.65"/>
<polygon points="36,0 44,0 43,79 34,79" fill="#6848a4" opacity="0.85"/>
<polygon points="43,0 58,0 60,79 43,79" fill="#aab0ee" opacity="0.9"/>
<polygon points="40,0 50,0 48,18 42,16" fill="#dcdff8" opacity="0.9"/>
<polygon points="50,10 56,8 58,79 52,79" fill="#8e96e2" opacity="0.8"/>
<polygon points="60,16 80,22 80,79 61,79" fill="#3c4c96" opacity="0.9"/>
<polygon points="60,0 80,0 80,14 62,18" fill="#8aa890" opacity="0.8"/>
<ellipse cx="66" cy="6" rx="5" ry="4.5" fill="#f6f6dc"/>
<ellipse cx="76" cy="9" rx="4" ry="5" fill="#f2f2e0"/>
<polygon points="60,22 80,28 80,38 61,32" fill="#c0c8f0" opacity="0.6"/>
<polygon points="64,44 80,50 80,58 66,54" fill="#6a88d0" opacity="0.7"/>
<polygon points="62,62 74,66 74,74 63,72" fill="#5a78c8" opacity="0.6"/>
<circle cx="29" cy="70" r="2.4" fill="#f050c0"/>
</g>
</svg></svg>
<span class="t" style="left:682.60px;top:712px;font-size:20px;color:#fff;transform:scaleX(0.9913);opacity:0.6;text-shadow:1px 1px 1px rgba(60,60,110,0.55);">image</span>
<span class="t" style="left:677.40px;top:733px;font-size:20px;color:#fff;transform:scaleX(1.0082);opacity:0.6;text-shadow:1px 1px 1px rgba(60,60,110,0.55);">sample</span>
<svg style="left:665px;top:780px;" width="18" height="17" viewBox="0 0 18 17"><rect x="0.5" y="0.5" width="17" height="16" fill="#eef0ec" stroke="#2a7074" stroke-width="1"/><rect x="2.4" y="2.4" width="13.2" height="12.2" fill="#357a7e"/><rect x="3.60" y="6.00" width="1.0" height="1.0" fill="#fff"/><rect x="4.60" y="6.00" width="1.0" height="1.0" fill="#fff"/><rect x="5.60" y="6.00" width="1.0" height="1.0" fill="#fff"/><rect x="6.60" y="6.00" width="1.0" height="1.0" fill="#fff"/><rect x="7.60" y="6.00" width="1.0" height="1.0" fill="#fff"/><rect x="3.60" y="7.00" width="1.0" height="1.0" fill="#fff"/><rect x="7.60" y="7.00" width="1.0" height="1.0" fill="#fff"/><rect x="3.60" y="8.00" width="1.0" height="1.0" fill="#fff"/><rect x="7.60" y="8.00" width="1.0" height="1.0" fill="#fff"/><rect x="3.60" y="9.00" width="1.0" height="1.0" fill="#fff"/><rect x="7.60" y="9.00" width="1.0" height="1.0" fill="#fff"/><rect x="3.60" y="10.00" width="1.0" height="1.0" fill="#fff"/><rect x="4.60" y="10.00" width="1.0" height="1.0" fill="#fff"/><rect x="5.60" y="10.00" width="1.0" height="1.0" fill="#fff"/><rect x="6.60" y="10.00" width="1.0" height="1.0" fill="#fff"/><rect x="7.60" y="10.00" width="1.0" height="1.0" fill="#fff"/><rect x="9.60" y="6.00" width="1.0" height="1.0" fill="#fff"/><rect x="13.60" y="6.00" width="1.0" height="1.0" fill="#fff"/><rect x="9.60" y="7.00" width="1.0" height="1.0" fill="#fff"/><rect x="13.60" y="7.00" width="1.0" height="1.0" fill="#fff"/><rect x="9.60" y="8.00" width="1.0" height="1.0" fill="#fff"/><rect x="10.60" y="8.00" width="1.0" height="1.0" fill="#fff"/><rect x="11.60" y="8.00" width="1.0" height="1.0" fill="#fff"/><rect x="12.60" y="8.00" width="1.0" height="1.0" fill="#fff"/><rect x="13.60" y="8.00" width="1.0" height="1.0" fill="#fff"/><rect x="13.60" y="9.00" width="1.0" height="1.0" fill="#fff"/><rect x="13.60" y="10.00" width="1.0" height="1.0" fill="#fff"/></svg>
<span class="t" style="left:696.00px;top:784px;font-size:10px;color:#16888c;transform:scaleX(0.9594);">SAY YES</span>
<svg style="left:771px;top:691px;" width="86" height="86" viewBox="0 0 86 86"><rect x="0.5" y="0.5" width="85" height="85" fill="#5f9a9a" stroke="#246c70" stroke-width="1"/>
<polygon points="1,80 5,80 85,80 85,85 1,85" fill="#8db6b2"/>
<polygon points="1,1 5.3,1 5.3,80 1,85" fill="#5a9090"/>
<svg x="5.3" y="1" width="79.7" height="79" viewBox="0 0 80 79" preserveAspectRatio="none">
<rect width="80" height="79" fill="url(#ag)"/>
<g filter="url(#ab)">
<polygon points="17,0 30,0 36,18 30,30 22,22" fill="#57488c" opacity="0.8"/>
<polygon points="22,12 30,10 33,22 26,25" fill="#c0608a" opacity="0.65"/>
<polygon points="36,0 44,0 43,79 34,79" fill="#6848a4" opacity="0.85"/>
<polygon points="43,0 58,0 60,79 43,79" fill="#aab0ee" opacity="0.9"/>
<polygon points="40,0 50,0 48,18 42,16" fill="#dcdff8" opacity="0.9"/>
<polygon points="50,10 56,8 58,79 52,79" fill="#8e96e2" opacity="0.8"/>
<polygon points="60,16 80,22 80,79 61,79" fill="#3c4c96" opacity="0.9"/>
<polygon points="60,0 80,0 80,14 62,18" fill="#8aa890" opacity="0.8"/>
<ellipse cx="66" cy="6" rx="5" ry="4.5" fill="#f6f6dc"/>
<ellipse cx="76" cy="9" rx="4" ry="5" fill="#f2f2e0"/>
<polygon points="60,22 80,28 80,38 61,32" fill="#c0c8f0" opacity="0.6"/>
<polygon points="64,44 80,50 80,58 66,54" fill="#6a88d0" opacity="0.7"/>
<polygon points="62,62 74,66 74,74 63,72" fill="#5a78c8" opacity="0.6"/>
<circle cx="29" cy="70" r="2.4" fill="#f050c0"/>
</g>
</svg></svg>
<span class="t" style="left:788.60px;top:712px;font-size:20px;color:#fff;transform:scaleX(0.9913);opacity:0.6;text-shadow:1px 1px 1px rgba(60,60,110,0.55);">image</span>
<span class="t" style="left:783.40px;top:733px;font-size:20px;color:#fff;transform:scaleX(1.0082);opacity:0.6;text-shadow:1px 1px 1px rgba(60,60,110,0.55);">sample</span>
<svg style="left:771px;top:780px;" width="18" height="17" viewBox="0 0 18 17"><rect x="0.5" y="0.5" width="17" height="16" fill="#eef0ec" stroke="#2a7074" stroke-width="1"/><rect x="2.4" y="2.4" width="13.2" height="12.2" fill="#357a7e"/><rect x="3.60" y="6.00" width="1.0" height="1.0" fill="#fff"/><rect x="4.60" y="6.00" width="1.0" height="1.0" fill="#fff"/><rect x="5.60" y="6.00" width="1.0" height="1.0" fill="#fff"/><rect x="6.60" y="6.00" width="1.0" height="1.0" fill="#fff"/><rect x="7.60" y="6.00" width="1.0" height="1.0" fill="#fff"/><rect x="3.60" y="7.00" width="1.0" height="1.0" fill="#fff"/><rect x="7.60" y="7.00" width="1.0" height="1.0" fill="#fff"/><rect x="3.60" y="8.00" width="1.0" height="1.0" fill="#fff"/><rect x="7.60" y="8.00" width="1.0" height="1.0" fill="#fff"/><rect x="3.60" y="9.00" width="1.0" height="1.0" fill="#fff"/><rect x="7.60" y="9.00" width="1.0" height="1.0" fill="#fff"/><rect x="3.60" y="10.00" width="1.0" height="1.0" fill="#fff"/><rect x="4.60" y="10.00" width="1.0" height="1.0" fill="#fff"/><rect x="5.60" y="10.00" width="1.0" height="1.0" fill="#fff"/><rect x="6.60" y="10.00" width="1.0" height="1.0" fill="#fff"/><rect x="7.60" y="10.00" width="1.0" height="1.0" fill="#fff"/><rect x="9.60" y="6.00" width="1.0" height="1.0" fill="#fff"/><rect x="10.60" y="6.00" width="1.0" height="1.0" fill="#fff"/><rect x="11.60" y="6.00" width="1.0" height="1.0" fill="#fff"/><rect x="12.60" y="6.00" width="1.0" height="1.0" fill="#fff"/><rect x="13.60" y="6.00" width="1.0" height="1.0" fill="#fff"/><rect x="9.60" y="7.00" width="1.0" height="1.0" fill="#fff"/><rect x="9.60" y="8.00" width="1.0" height="1.0" fill="#fff"/><rect x="10.60" y="8.00" width="1.0" height="1.0" fill="#fff"/><rect x="11.60" y="8.00" width="1.0" height="1.0" fill="#fff"/><rect x="12.60" y="8.00" width="1.0" height="1.0" fill="#fff"/><rect x="13.60" y="8.00" width="1.0" height="1.0" fill="#fff"/><rect x="13.60" y="9.00" width="1.0" height="1.0" fill="#fff"/><rect x="9.60" y="10.00" width="1.0" height="1.0" fill="#fff"/><rect x="10.60" y="10.00" width="1.0" height="1.0" fill="#fff"/><rect x="11.60" y="10.00" width="1.0" height="1.0" fill="#fff"/><rect x="12.60" y="10.00" width="1.0" height="1.0" fill="#fff"/><rect x="13.60" y="10.00" width="1.0" height="1.0" fill="#fff"/></svg>
<span class="t" style="left:802.00px;top:784px;font-size:10px;color:#16888c;transform:scaleX(0.9594);">SAY YES</span>
<div style="left:0px;top:837px;width:863px;height:35px;background:#f1f1f1;"></div>
<div style="left:203px;top:837px;width:17px;height:0px;background:#e4e4e4;"></div>
<span class="t" style="left:675.40px;top:851px;font-size:11px;color:#8a8a8a;transform:scaleX(0.9627);">Family site</span>
<svg style="left:745.6px;top:847.8px;" width="110" height="17" viewBox="0 0 110 17"><rect x="0" y="0" width="110" height="17" fill="#fff"/><rect x="0" y="0" width="109" height="16" fill="#808080"/><rect x="1" y="1" width="108" height="15" fill="#d4d0c8"/><rect x="1" y="1" width="107" height="14" fill="#404040"/><rect x="2" y="2" width="106" height="13" fill="#d0d0d0"/><rect x="92" y="2" width="16" height="13" fill="#404040"/><rect x="92" y="2" width="15" height="12" fill="#fff"/><rect x="93" y="3" width="14" height="11" fill="#808080"/><rect x="93" y="3" width="13" height="10" fill="#d4d0c8"/><polygon points="96,6.5 103,6.5 99.5,10" fill="#000"/></svg>
<div style="left:0px;top:871.6px;width:863px;height:10.4px;background:#04446a;"></div>
<div style="left:0px;top:882px;width:863px;height:1.2px;background:#0a1420;"></div>
<div style="left:0px;top:883.2px;width:863px;height:19px;background:#dcdcdc;"></div>
<div style="left:0px;top:900.8px;width:863px;height:3.4px;background:linear-gradient(180deg,#d0d0d0,#8a8a8a);"></div>
<div style="left:0px;top:904px;width:863px;height:92px;background:#2c3548;"></div>
<div style="left:0px;top:904px;width:202.6px;height:92px;background:#44526c;"></div>
<div style="left:202.6px;top:904px;width:17.4px;height:92px;background:#131e38;"></div>
<span class="t" style="left:34.80px;top:948px;font-size:25px;color:#f0f3f8;transform:scaleX(0.9077);-webkit-text-stroke:0.55px #44526c;">Get MUSIC</span>
<div style="left:87px;top:934px;width:50px;height:50px;border-radius:50%;background:#5f7088;overflow:hidden;"><span class="t" style="left:-52.20px;top:14px;font-size:25px;color:#f0f3f8;transform:scaleX(0.9077);position:absolute;-webkit-text-stroke:0.55px #5f7088;">Get MUSIC</span></div>
<span class="t" style="left:68.00px;top:972px;font-size:7px;color:#c8d0dc;font-weight:bold;letter-spacing:0.8px;transform:scaleX(1.0218);opacity:0.55;">MUSIC COMMUNITY</span>
<svg style="left:12px;top:962px;" width="90" height="30" viewBox="0 0 90 30"><text x="3.8" y="23.6" font-size="23" font-weight="bold" font-style="italic" fill="#fff" textLength="80" lengthAdjust="spacingAndGlyphs" font-family="'Liberation Sans','Noto Sans CJK SC',sans-serif">昵享网</text></svg>
<span class="t" style="left:100.60px;top:968px;font-size:20px;color:#fff;font-weight:bold;font-style:italic;transform:scaleX(0.8532);text-shadow:0 0 0.6px #fff;">www.nipic.cn</span>
<div style="left:632.7px;top:967px;width:219.3px;height:18px;background:rgba(34,40,56,0.92);"></div>
<span class="t" style="left:799.00px;top:963px;font-size:13px;color:#8d929c;font-weight:bold;transform:scaleX(0.9859);">Cgetfile</span>
<div style="left:632.7px;top:967px;width:219.3px;height:18px;background:rgba(34,40,56,0.35);"></div>
<span class="t" style="left:642.50px;top:970px;font-size:12px;color:#fff;transform:scaleX(0.9051);">ID:2526098 NO:20101201174726079275</span>
<svg style="left:463.5px;top:983.1px;" width="41" height="19" viewBox="0 0 41 19"><text x="3" y="13.5" font-size="8.7" fill="#9aa0aa" font-family="'Liberation Sans','Noto Sans CJK KR',sans-serif">회사소개</text></svg>
<svg style="left:505.5px;top:983.1px;" width="42" height="19" viewBox="0 0 42 19"><text x="3" y="13.5" font-size="8.7" fill="#9aa0aa" font-family="'Liberation Sans','Noto Sans CJK KR',sans-serif">사업제휴</text></svg>
<svg style="left:548px;top:983.1px;" width="42" height="19" viewBox="0 0 42 19"><text x="3" y="13.5" font-size="8.7" fill="#9aa0aa" font-family="'Liberation Sans','Noto Sans CJK KR',sans-serif">광고안내</text></svg>
<svg style="left:590.5px;top:983.1px;" width="68" height="19" viewBox="0 0 68 19"><text x="3" y="13.5" font-size="8.7" fill="#9aa0aa" font-family="'Liberation Sans','Noto Sans CJK KR',sans-serif">인터넷비즈니스</text></svg>
<svg style="left:659px;top:983.1px;" width="42" height="19" viewBox="0 0 42 19"><text x="3" y="13.5" font-size="8.7" fill="#9aa0aa" font-family="'Liberation Sans','Noto Sans CJK KR',sans-serif">고객센터</text></svg>
<svg style="left:701px;top:983.1px;" width="77" height="19" viewBox="0 0 77 19"><text x="3" y="13.5" font-size="8.7" fill="#9aa0aa" font-family="'Liberation Sans','Noto Sans CJK KR',sans-serif">개인정보보호정책</text></svg>
<svg style="left:778px;top:983.1px;" width="42" height="19" viewBox="0 0 42 19"><text x="3" y="13.5" font-size="8.7" fill="#9aa0aa" font-family="'Liberation Sans','Noto Sans CJK KR',sans-serif">사이트맵</text></svg>
<svg style="left:820.5px;top:983.1px;" width="32" height="19" viewBox="0 0 32 19"><text x="3" y="13.5" font-size="8.7" fill="#9aa0aa" font-family="'Liberation Sans','Noto Sans CJK KR',sans-serif">도움말</text></svg>
<div style="left:504.6px;top:988px;width:1px;height:8px;background:#8a909a;"></div>
<div style="left:547px;top:988px;width:1px;height:8px;background:#8a909a;"></div>
<div style="left:589.5px;top:988px;width:1px;height:8px;background:#8a909a;"></div>
<div style="left:658.3px;top:988px;width:1px;height:8px;background:#8a909a;"></div>
<div style="left:700.3px;top:988px;width:1px;height:8px;background:#8a909a;"></div>
<div style="left:777.3px;top:988px;width:1px;height:8px;background:#8a909a;"></div>
<div style="left:819.5px;top:988px;width:1px;height:8px;background:#8a909a;"></div>
</div></body></html>
